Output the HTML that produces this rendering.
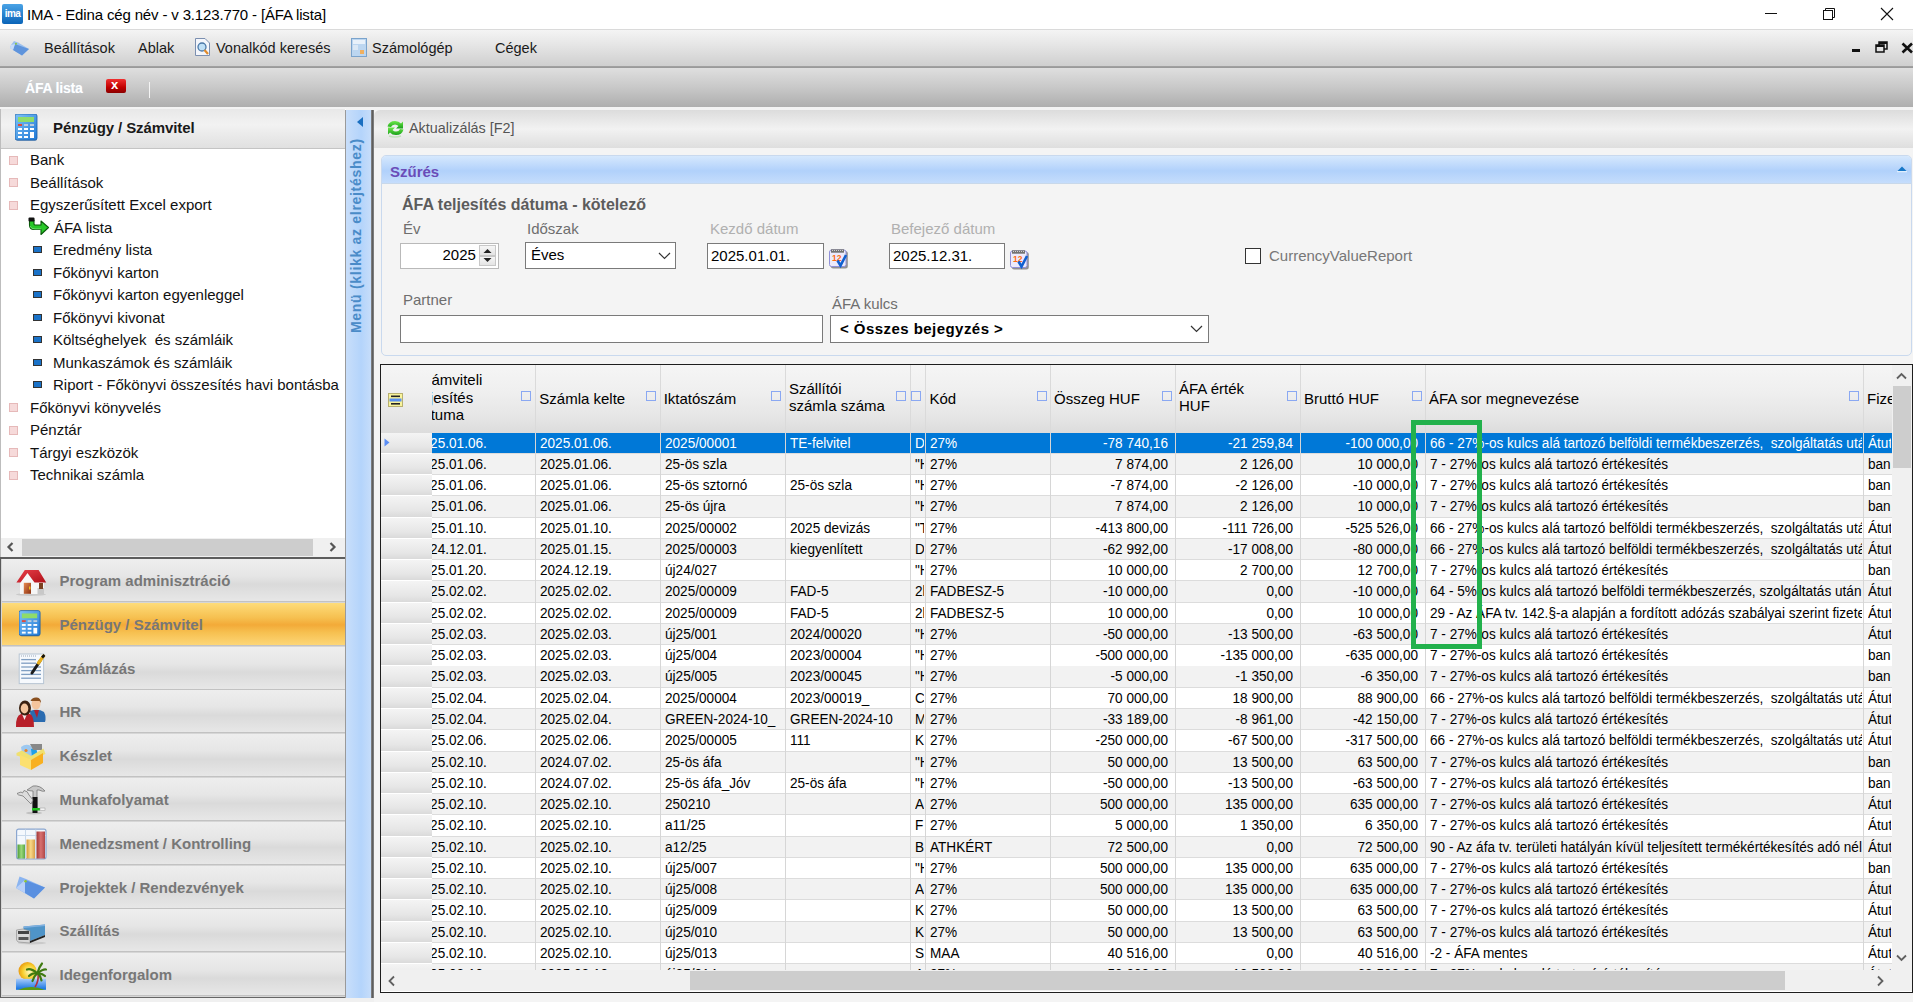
<!DOCTYPE html><html><head><meta charset="utf-8"><style>
*{box-sizing:border-box;margin:0;padding:0}
html,body{width:1913px;height:1002px;overflow:hidden;background:#f0f0f0;font-family:"Liberation Sans",sans-serif;color:#000}
.abs{position:absolute}
.t{position:absolute;white-space:nowrap;line-height:1}
#title{left:0;top:0;width:1913px;height:29px;background:#fff}
#menubar{left:0;top:29px;width:1913px;height:38px;background:linear-gradient(#f4f4f4,#e6e6e6 40%,#cfcfcf);border-top:1px solid #dadada;border-bottom:1px solid #a0a0a0}
#tabbar{left:0;top:67px;width:1913px;height:40px;background:linear-gradient(#dfdfdf,#c8c8c8 50%,#aeaeae);border-top:1px solid #9a9a9a}
#sep1{left:0;top:107px;width:1913px;height:3px;background:#f3f3f3}
#leftpanel{left:0;top:109px;width:346px;height:889px;background:#fff;border-left:1px solid #bdbdbd}
#lhead{left:1px;top:109px;width:344px;height:39.5px;background:linear-gradient(#e8e8e8,#f2f2f2 40%,#e0e0e0 100%);border-bottom:1px solid #c4c4c4}
.tree{font-size:15px;color:#111;white-space:pre}
.bul{position:absolute;width:9px;height:9px;background:#f6dada;border:1px solid #e6b9b9}
.bul2{position:absolute;width:9px;height:7px;background:#1a72c8;border:1px solid #333}
#hscroll{left:1px;top:538px;width:344px;height:19px;background:#f0f0f0}
#acc{left:0;top:557px;width:346px;height:441px;background:#d6d6d6;border-left:1.5px solid #5a5a5a;border-top:2px solid #5d5d5d;border-right:1.5px solid #5a5a5a;border-bottom:1.5px solid #666}
.btn{position:absolute;left:1.5px;width:343px;height:43px;background:linear-gradient(#eeeeee,#e6e6e6 40%,#dadada 60%,#e7e7e7);border-bottom:1px solid #c2c2c2}
.btn.sel{background:linear-gradient(#fddc7a,#f6c050 35%,#f3aa38 52%,#f6c050 70%,#fdd677)}
.btn .bt{position:absolute;left:58px;top:14px;font-size:15px;font-weight:bold;color:#777;white-space:nowrap;line-height:1}
#vbar{left:345px;top:110px;width:26px;height:888px;background:linear-gradient(90deg,#c8defa,#b4d4fb 60%,#c6ddfa);border-left:1px solid #9a9a9a}
#vline{left:371px;top:110px;width:3px;height:888px;background:linear-gradient(90deg,#8a8a8a,#5e5e5e 50%,#8a8a8a)}
#content{left:374px;top:110px;width:1539px;height:892px;background:#f4f4f4}
#toolbar{left:374px;top:110px;width:1539px;height:38px;background:linear-gradient(#dcdcdc,#f2f2f2 50%,#dedede);border-radius:6px 0 0 0}
#filter{left:381px;top:155px;width:1531px;height:201px;border:1px solid #c9d9ee;border-radius:5px;background:#f4f4f4}
#fhead{left:382px;top:156px;width:1529px;height:28px;background:linear-gradient(#d6e8fd,#b1d1fb 55%,#c5ddfc);border-bottom:1px solid #c8d8ea;border-radius:4px 4px 0 0}
.lbl{font-size:15px;color:#6e6e6e}
.lbl2{font-size:15px;color:#b0b0b0}
.inp{position:absolute;background:#fff;border:1px solid #7a7a7a}
#grid{left:380px;top:364px;width:1533px;height:629px;border:1px solid #707070;background:#fff;overflow:hidden}
.gh{position:absolute;font-size:15px;color:#111;white-space:nowrap;line-height:17px}
.row{position:absolute;left:0;height:21px;width:1512px;font-size:14px;white-space:nowrap}
.c{position:absolute;top:0;height:20px;line-height:20px;overflow:hidden;padding-left:4px;border-right:1px solid #dcdcdc}
.r{text-align:right;padding-right:5px;padding-left:0}
.fsq{position:absolute;width:11px;height:11px;border:1.5px solid #7b9ef2}
</style></head><body>
<div id="title" class="abs"></div>
<svg class="abs" style="left:2px;top:4px" width="21" height="20" viewBox="0 0 21 20"><defs><linearGradient id="ig" x1="0" y1="0" x2="0" y2="1"><stop offset="0" stop-color="#4aa3e6"/><stop offset="1" stop-color="#0a64b8"/></linearGradient></defs><rect x="0" y="0" width="21" height="20" rx="2" fill="url(#ig)"/><text x="10.5" y="13" font-family="Liberation Sans" font-size="10" font-weight="bold" fill="#fff" text-anchor="middle" letter-spacing="-0.6">ima</text></svg>
<div class="t" style="left:27px;top:7px;font-size:15px;letter-spacing:-0.15px;color:#000">IMA - Edina cég név - v 3.123.770 - [ÁFA lista]</div>
<div class="abs" style="left:1765px;top:13px;width:12px;height:1px;background:#111"></div>
<svg class="abs" style="left:1822px;top:7px" width="14" height="14"><rect x="1.5" y="3.5" width="9" height="9" fill="none" stroke="#111"/><path d="M3.5 3.5V1.5H12.5V10.5H10.5" fill="none" stroke="#111"/></svg>
<svg class="abs" style="left:1880px;top:7px" width="14" height="14"><path d="M1 1L13 13M13 1L1 13" stroke="#111" stroke-width="1.1"/></svg>
<div id="menubar" class="abs"></div>
<svg class="abs" style="left:9px;top:39px" width="22" height="18" viewBox="0 0 22 18"><path d="M2 6L5 2L9 3.5L20 10L13 16.5L1 9Z" fill="#9cc0ee"/><path d="M6 5L20 10L13 16.5L4 11Z" fill="#5f94dc"/><path d="M2 6L6 5L4 11L1 9Z" fill="#c8dcf8"/><circle cx="7" cy="4.8" r="1" fill="#8cc83c"/></svg>
<div class="t" style="left:44px;top:41px;font-size:14.5px;color:#1a1a1a">Beállítások</div>
<div class="t" style="left:138px;top:41px;font-size:14.5px;color:#1a1a1a">Ablak</div>
<div class="t" style="left:216px;top:41px;font-size:14.5px;color:#1a1a1a">Vonalkód keresés</div>
<div class="t" style="left:372px;top:41px;font-size:14.5px;color:#1a1a1a">Számológép</div>
<div class="t" style="left:495px;top:41px;font-size:14.5px;color:#1a1a1a">Cégek</div>
<svg class="abs" style="left:194px;top:38px" width="18" height="19" viewBox="0 0 18 19"><path d="M1.5 0.5H11L15.5 5V17.5H1.5Z" fill="#f4f6fb" stroke="#7b8fb0"/><circle cx="8" cy="9" r="4" fill="#bfe0f7" stroke="#4a78a8" stroke-width="1.3"/><path d="M10.5 12L14 16" stroke="#e08a2a" stroke-width="2.2"/></svg>
<svg class="abs" style="left:351px;top:38px" width="16" height="19" viewBox="0 0 16 19"><rect x="0.5" y="0.5" width="15" height="18" fill="#bcd6f0" stroke="#7aa3cc"/><rect x="2" y="2" width="12" height="4" fill="#e8f1fa"/><rect x="2" y="7" width="5" height="5" fill="#dbe8f5"/><rect x="9" y="12" width="4" height="4" fill="#f0b060"/></svg>
<div class="abs" style="left:1852px;top:49px;width:8px;height:3px;background:#111"></div>
<svg class="abs" style="left:1875px;top:41px" width="14" height="12"><rect x="1" y="4" width="8" height="7" fill="none" stroke="#111" stroke-width="1.5"/><rect x="1" y="4" width="8" height="2" fill="#111"/><path d="M4 4V1H12V8H9" fill="none" stroke="#111" stroke-width="1.5"/><rect x="4" y="1" width="8" height="2" fill="#111"/></svg>
<svg class="abs" style="left:1901px;top:42px" width="14" height="12"><path d="M1.5 1.5L11 10.5M11 1.5L1.5 10.5" stroke="#111" stroke-width="2.6"/></svg>
<div id="tabbar" class="abs"></div>
<div class="t" style="left:25px;top:81px;font-size:14px;font-weight:bold;color:#fff;letter-spacing:-0.2px;text-shadow:0 0 1px #c8d8e8">ÁFA lista</div>
<div class="abs" style="left:106px;top:79px;width:20px;height:14px;border-radius:2px;background:linear-gradient(#f03030,#c00000 60%,#8a0000);"></div>
<div class="t" style="left:111px;top:78px;font-size:13px;font-weight:bold;color:#fff">x</div>
<div class="abs" style="left:149px;top:82px;width:1px;height:16px;background:#f4f4f4"></div>
<div id="sep1" class="abs"></div>
<div id="leftpanel" class="abs"></div>
<div id="lhead" class="abs"></div>
<svg class="abs" style="left:15px;top:114px" width="24" height="28" viewBox="0 0 24 28"><defs><linearGradient id="cg129" x1="0" y1="0" x2="1" y2="1"><stop offset="0" stop-color="#7ec3f7"/><stop offset="1" stop-color="#1f78d6"/></linearGradient></defs><rect x="1" y="1" width="21" height="26" rx="2" fill="#2a5f9e" opacity=".5"/><rect x="0" y="0" width="22" height="26" rx="2" fill="url(#cg129)" stroke="#1d5fa8" stroke-width=".8"/><rect x="3" y="3" width="16" height="5" fill="#8fdc6a"/><rect x="3" y="10" width="4" height="2" fill="#e04a3a"/><rect x="9" y="10" width="4" height="2" fill="#bcd"/><rect x="15" y="10" width="4" height="2" fill="#bcd"/><g fill="#fff"><rect x="3" y="14" width="4" height="2"/><rect x="9" y="14" width="4" height="2"/><rect x="3" y="18" width="4" height="2"/><rect x="9" y="18" width="4" height="2"/><rect x="3" y="22" width="4" height="2"/><rect x="9" y="22" width="4" height="2"/><rect x="15" y="14" width="4" height="2"/><rect x="15" y="18" width="4" height="6"/></g></svg>
<div class="t" style="left:53px;top:120px;font-size:15px;font-weight:bold;color:#1a1a1a;letter-spacing:-0.1px">Pénzügy / Számvitel</div>
<div class="abs" style="left:1px;top:148px;width:344px;height:390px;overflow:hidden">
<div class="bul" style="left:8px;top:7.6px"></div>
<div class="t tree" style="left:29px;top:4.3px">Bank</div>
<div class="bul" style="left:8px;top:30.1px"></div>
<div class="t tree" style="left:29px;top:26.8px">Beállítások</div>
<div class="bul" style="left:8px;top:52.6px"></div>
<div class="t tree" style="left:29px;top:49.3px">Egyszerűsített Excel export</div>
<svg class="abs" style="left:26px;top:69.3px" width="23" height="19" viewBox="0 0 23 19"><path d="M2.5 3V8Q2.5 12.5 7 12.5H14V17.5L21.5 10.5L14 4V8H8Q7 8 7 7V3Z" fill="#28c828" stroke="#0a5a0a" stroke-width="1.1" stroke-linejoin="round"/><path d="M3 9Q4 12 8 12H14" stroke="#9cf09c" stroke-width="1" fill="none" opacity=".6"/><rect x="1.5" y="0.5" width="6" height="4" rx="1" fill="#111"/></svg>
<div class="t tree" style="left:53px;top:71.8px">ÁFA lista</div>
<div class="bul2" style="left:32px;top:98.1px"></div>
<div class="t tree" style="left:52px;top:94.3px">Eredmény lista</div>
<div class="bul2" style="left:32px;top:120.6px"></div>
<div class="t tree" style="left:52px;top:116.8px">Főkönyvi karton</div>
<div class="bul2" style="left:32px;top:143.1px"></div>
<div class="t tree" style="left:52px;top:139.3px">Főkönyvi karton egyenleggel</div>
<div class="bul2" style="left:32px;top:165.6px"></div>
<div class="t tree" style="left:52px;top:161.8px">Főkönyvi kivonat</div>
<div class="bul2" style="left:32px;top:188.1px"></div>
<div class="t tree" style="left:52px;top:184.3px">Költséghelyek  és számláik</div>
<div class="bul2" style="left:32px;top:210.6px"></div>
<div class="t tree" style="left:52px;top:206.8px">Munkaszámok és számláik</div>
<div class="bul2" style="left:32px;top:233.1px"></div>
<div class="t tree" style="left:52px;top:229.3px">Riport - Főkönyvi összesítés havi bontásba</div>
<div class="bul" style="left:8px;top:255.1px"></div>
<div class="t tree" style="left:29px;top:251.8px">Főkönyvi könyvelés</div>
<div class="bul" style="left:8px;top:277.6px"></div>
<div class="t tree" style="left:29px;top:274.3px">Pénztár</div>
<div class="bul" style="left:8px;top:300.1px"></div>
<div class="t tree" style="left:29px;top:296.8px">Tárgyi eszközök</div>
<div class="bul" style="left:8px;top:322.6px"></div>
<div class="t tree" style="left:29px;top:319.3px">Technikai számla</div>
</div>
<div id="hscroll" class="abs"></div>
<div class="abs" style="left:22px;top:539px;width:291px;height:17px;background:#cdcdcd"></div>
<svg class="abs" style="left:6px;top:542px" width="8" height="10"><path d="M6.5 1L2.5 5L6.5 9" fill="none" stroke="#555" stroke-width="2.2"/></svg>
<svg class="abs" style="left:329px;top:542px" width="8" height="10"><path d="M1.5 1L5.5 5L1.5 9" fill="none" stroke="#555" stroke-width="2.2"/></svg>
<div id="acc" class="abs"></div>
<div class="btn" style="top:559.0px"><div class="bt">Program adminisztráció</div></div>
<div class="btn sel" style="top:602.8px"><div class="bt">Pénzügy / Számvitel</div></div>
<div class="btn" style="top:646.6px"><div class="bt">Számlázás</div></div>
<div class="btn" style="top:690.4px"><div class="bt">HR</div></div>
<div class="btn" style="top:734.2px"><div class="bt">Készlet</div></div>
<div class="btn" style="top:778.0px"><div class="bt">Munkafolyamat</div></div>
<div class="btn" style="top:821.8px"><div class="bt">Menedzsment / Kontrolling</div></div>
<div class="btn" style="top:865.6px"><div class="bt">Projektek / Rendezvények</div></div>
<div class="btn" style="top:909.4px"><div class="bt">Szállítás</div></div>
<div class="btn" style="top:953.2px"><div class="bt">Idegenforgalom</div></div>
<svg class="abs" style="left:10px;top:562px" width="40" height="40" viewBox="0 0 40 40"><defs><linearGradient id="roof" x1="0" y1="0" x2="1" y2="1"><stop offset="0" stop-color="#e8404a"/><stop offset="1" stop-color="#b01018"/></linearGradient><linearGradient id="door" x1="0" y1="0" x2="1" y2="1"><stop offset="0" stop-color="#e88a50"/><stop offset="1" stop-color="#8a3010"/></linearGradient></defs>
<ellipse cx="21" cy="32.5" rx="15" ry="1.5" fill="#bbb" opacity=".6"/>
<rect x="10" y="19" width="24" height="13" fill="#f6f6f6"/><rect x="27.5" y="26" width="6.5" height="6" fill="#c8c8c8"/>
<path d="M10 20.6L17.5 11L24.5 20.6Z" fill="#f8f8f8"/>
<path d="M6.4 20.6L14.8 8H28.6L36.2 20.6H24.5L17.5 11L10.5 20.6Z" fill="url(#roof)"/>
<rect x="13.8" y="20.8" width="7.2" height="11" fill="url(#door)"/><rect x="19" y="24.5" width="1.5" height="3" fill="#f0c020"/>
<rect x="29" y="21" width="4" height="6" fill="#7a4020"/></svg>
<svg class="abs" style="left:19px;top:610px" width="23" height="28" viewBox="0 0 24 28"><defs><linearGradient id="cg629" x1="0" y1="0" x2="1" y2="1"><stop offset="0" stop-color="#7ec3f7"/><stop offset="1" stop-color="#1f78d6"/></linearGradient></defs><rect x="1" y="1" width="21" height="26" rx="2" fill="#2a5f9e" opacity=".5"/><rect x="0" y="0" width="22" height="26" rx="2" fill="url(#cg629)" stroke="#1d5fa8" stroke-width=".8"/><rect x="3" y="3" width="16" height="5" fill="#8fdc6a"/><rect x="3" y="10" width="4" height="2" fill="#e04a3a"/><rect x="9" y="10" width="4" height="2" fill="#bcd"/><rect x="15" y="10" width="4" height="2" fill="#bcd"/><g fill="#fff"><rect x="3" y="14" width="4" height="2"/><rect x="9" y="14" width="4" height="2"/><rect x="3" y="18" width="4" height="2"/><rect x="9" y="18" width="4" height="2"/><rect x="3" y="22" width="4" height="2"/><rect x="9" y="22" width="4" height="2"/><rect x="15" y="14" width="4" height="2"/><rect x="15" y="18" width="4" height="6"/></g></svg>
<svg class="abs" style="left:10px;top:648px" width="40" height="40" viewBox="0 0 40 40"><rect x="9.2" y="6" width="24.4" height="29.6" fill="#f6f9fd" stroke="#b8c6d4" stroke-width="1"/>
<path d="M11 8H26" stroke="#9aa8b8" stroke-width="1" stroke-dasharray="1 1"/>
<g stroke="#7f9ec2" stroke-width="1.3"><path d="M11.2 11.6H26"/><path d="M11.2 15.2H26"/><path d="M11.2 19H31"/><path d="M11.2 22.6H31"/><path d="M11.2 26.4H31"/><path d="M11.2 30.2H31"/></g>
<path d="M22 25L30 13" stroke="#1a1a1a" stroke-width="3" stroke-linecap="round"/><path d="M28.5 15L33.5 8" stroke="#e8b020" stroke-width="3.2" stroke-linecap="round"/><path d="M32 9.5L34.5 7" stroke="#111" stroke-width="2.5"/></svg>
<svg class="abs" style="left:10px;top:692px" width="40" height="40" viewBox="0 0 40 40"><path d="M20 19Q28 16 34 20Q36.5 25 35 30H21Z" fill="#2a6bb0"/><path d="M24 18L27 26L29 18Z" fill="#b02030"/>
<ellipse cx="26" cy="12" rx="4.5" ry="5.5" fill="#f4c49c"/><path d="M20.5 9Q22 5 27 5.5Q31 6 31 11L29.5 9Q25 9 20.5 9Z" fill="#8a5020"/>
<path d="M6 35Q5.5 24 11 22H20Q24 24 24 35Z" fill="#b8202a"/><path d="M12 22L14.5 28L17 22Z" fill="#f8e8e8"/>
<ellipse cx="15" cy="16" rx="6" ry="7.5" fill="#3a2010"/><ellipse cx="14.5" cy="16.5" rx="3.8" ry="5" fill="#f4c49c"/></svg>
<svg class="abs" style="left:10px;top:736px" width="40" height="40" viewBox="0 0 40 40"><path d="M11 11Q16 7 21 10L26 20L13 22Z" fill="#9cc8f0"/><circle cx="16" cy="14.5" r="1.6" fill="#f08020"/><path d="M21 13L26 12L28 19L22 21Z" fill="#20a0e8"/><path d="M20 8H32V14H23Z" fill="#888"/>
<path d="M6.5 17L12 14.5L21 20L33.5 12.5L35.5 18L21 24L6.5 19.5Z" fill="#f0e070"/>
<path d="M10 19L21 24V34L10 29Z" fill="#fce070"/><path d="M21 24L33 17V27L21 34Z" fill="#f8b020"/></svg>
<svg class="abs" style="left:10px;top:779px" width="40" height="40" viewBox="0 0 40 40"><ellipse cx="24" cy="34" rx="8" ry="1.5" fill="#aaa" opacity=".6"/>
<path d="M23 7Q30 6 35 12Q33 13 29 11H27V30H23V12Q20 12 17 11Z" fill="#c8c8c8" stroke="#777" stroke-width=".8"/>
<rect x="22.5" y="18" width="5" height="16" fill="#111"/><rect x="22" y="29" width="8" height="2.5" fill="#20c020"/><rect x="30" y="29" width="5" height="2.5" fill="#f4f4f4" stroke="#999" stroke-width=".5"/>
<path d="M21 25L13 17Q7 16 7 14.5L11 13L12.5 14L14 11.5Q18 12 19 16L23 21Z" fill="#dcdcdc" stroke="#777" stroke-width=".8"/></svg>
<svg class="abs" style="left:10px;top:823px" width="40" height="40" viewBox="0 0 40 40"><rect x="6.6" y="6.2" width="29.4" height="29.6" rx="2" fill="#f4f8fd" stroke="#8aa6d0" stroke-width="1.2"/>
<path d="M7 12.5H36M15.5 6.5V36M25.8 6.5V36" stroke="#c8d8ea" stroke-width="1"/>
<defs><linearGradient id="gb" x1="0" y1="0" x2="1" y2="0"><stop offset="0" stop-color="#4a9a3a"/><stop offset=".5" stop-color="#9ad878"/><stop offset="1" stop-color="#5aa848"/></linearGradient><linearGradient id="yb" x1="0" y1="0" x2="1" y2="0"><stop offset="0" stop-color="#d89a38"/><stop offset=".5" stop-color="#f8d888"/><stop offset="1" stop-color="#d8a048"/></linearGradient><linearGradient id="rb" x1="0" y1="0" x2="1" y2="0"><stop offset="0" stop-color="#a03838"/><stop offset=".5" stop-color="#d87070"/><stop offset="1" stop-color="#b04848"/></linearGradient></defs>
<rect x="7.5" y="21.5" width="7.5" height="14" fill="url(#gb)"/><rect x="16.5" y="16.5" width="8.5" height="19" fill="url(#yb)"/><rect x="26.5" y="8.5" width="8.5" height="27" fill="url(#rb)"/></svg>
<svg class="abs" style="left:10px;top:867px" width="40" height="40" viewBox="0 0 40 40"><path d="M6 21L9.5 9.5L16 12L35 20.5L24 31.5Z" fill="#8ab4f0"/><path d="M15 13L35 20.5L24 31.5L15 26Z" fill="#5a90e0"/><path d="M6 21L15 26L15 13Z" fill="#b8d0f8"/><circle cx="15.5" cy="14.2" r="1.3" fill="#90c830"/></svg>
<svg class="abs" style="left:10px;top:910px" width="40" height="40" viewBox="0 0 40 40"><ellipse cx="22" cy="33" rx="14" ry="1.5" fill="#bbb" opacity=".6"/>
<path d="M13.5 16.5L35 14.5V25L20 31L13.5 27Z" fill="#4f94c8"/><path d="M13.5 16.5L35 14.5V16L14 18Z" fill="#7fb0e0"/>
<path d="M6.5 20L13 19L20 21V33L8 32L6.5 30Z" fill="#d8d8d8" stroke="#888" stroke-width=".6"/><rect x="8" y="21" width="11" height="3" fill="#444"/><rect x="8.5" y="27" width="10" height="3" fill="#555"/><path d="M20 31L35 25V27L20 33Z" fill="#222"/></svg>
<svg class="abs" style="left:10px;top:954px" width="40" height="40" viewBox="0 0 40 40"><defs><radialGradient id="sun" cx=".6" cy=".55" r=".6"><stop offset="0" stop-color="#fff8c0"/><stop offset=".6" stop-color="#f8d030"/><stop offset="1" stop-color="#e89a10"/></radialGradient><linearGradient id="sea" x1="0" y1="0" x2="0" y2="1"><stop offset="0" stop-color="#a8ccfc"/><stop offset="1" stop-color="#1070e0"/></linearGradient></defs>
<circle cx="17.5" cy="17" r="9" fill="url(#sun)"/>
<rect x="6" y="24.8" width="30" height="11" fill="url(#sea)"/><path d="M8 36Q21 30 35 36Z" fill="#5a9a10"/>
<path d="M25 33Q29 27 28 20" stroke="#b03040" stroke-width="1.6" fill="none"/>
<g stroke="#3f7a10" stroke-width="2.2" fill="none" stroke-linecap="round"><path d="M27 19Q21 14 17 15.5"/><path d="M27 19Q22 19 19 22"/><path d="M27.5 19Q24 22 22.5 27"/><path d="M27.5 19Q29 13 32 9.5"/><path d="M28 19Q33 15 36 15.5"/><path d="M28 19Q33 20 35 22"/><path d="M28 19Q31 23 31.5 26.5"/></g></svg>
<div id="vbar" class="abs"></div>
<svg class="abs" style="left:357px;top:117px" width="7" height="10"><path d="M6 0V10L0 5Z" fill="#1a6fc0"/></svg>
<div class="t" style="left:349px;top:333px;transform-origin:0 0;transform:rotate(-90deg);font-size:14px;font-weight:bold;color:#4a8bc8;letter-spacing:0.7px">Menü (klikk az elrejtéshez)</div>
<div id="vline" class="abs"></div>
<div id="content" class="abs"></div>
<div id="toolbar" class="abs"></div>
<svg class="abs" style="left:386px;top:118px" width="19" height="20" viewBox="0 0 19 20"><defs><linearGradient id="rg" x1="0" y1="0" x2="0" y2="1"><stop offset="0" stop-color="#6ee84a"/><stop offset="1" stop-color="#18a018"/></linearGradient></defs><path d="M1.5 8.5Q3 3 9 3Q13 3 15 5.5L17 3.5V10.5H10L12.5 8Q11 6.5 9 6.5Q6 6.5 5 9Z" fill="url(#rg)"/><path d="M17.5 11.5Q16 17 10 17Q6 17 4 14.5L2 16.5V9.5H9L6.5 12Q8 13.5 10 13.5Q13 13.5 14 11Z" fill="url(#rg)"/><path d="M3 18Q9 20 15 18" stroke="#9ad890" stroke-width="1.5" opacity=".5" fill="none"/></svg>
<div class="t" style="left:409px;top:121px;font-size:14.4px;color:#555">Aktualizálás [F2]</div>
<div id="filter" class="abs"></div>
<div id="fhead" class="abs"></div>
<div class="t" style="left:390px;top:164px;font-size:15px;font-weight:bold;color:#6a4cb8">Szűrés</div>
<svg class="abs" style="left:1897px;top:165px" width="10" height="8"><path d="M0.5 6L5 1.5L9.5 6Z" fill="#1878c8"/><rect x="0" y="6" width="10" height="1.3" fill="#e0eefc"/></svg>
<div class="t" style="left:402px;top:197px;font-size:16px;font-weight:bold;color:#5c5c5c">ÁFA teljesítés dátuma - kötelező</div>
<div class="t lbl" style="left:403px;top:221px">Év</div>
<div class="t lbl" style="left:527px;top:221px">Időszak</div>
<div class="t lbl2" style="left:710px;top:221px">Kezdő dátum</div>
<div class="t lbl2" style="left:891px;top:221px">Befejező dátum</div>
<div class="inp" style="left:400px;top:243px;width:99px;height:26px;border-color:#b9b9b9"></div>
<div class="t" style="left:442.5px;top:247px;font-size:15px">2025</div>
<div class="abs" style="left:479px;top:245px;width:17px;height:10.5px;background:linear-gradient(#f6f6f6,#e4e4e4);border:1px solid #c8c8c8"></div><div class="abs" style="left:479px;top:255.5px;width:17px;height:10px;background:linear-gradient(#f6f6f6,#e4e4e4);border:1px solid #c8c8c8"></div>
<svg class="abs" style="left:482px;top:246px" width="11" height="19"><path d="M1.5 7L5.5 3L9.5 7Z" fill="#222"/><path d="M1.5 12L5.5 16L9.5 12Z" fill="#222"/></svg>
<div class="inp" style="left:525px;top:242px;width:151px;height:27px;border:1.5px solid #7a7a7a"></div>
<div class="t" style="left:531px;top:247px;font-size:15px">Éves</div>
<svg class="abs" style="left:658px;top:252px" width="13" height="8"><path d="M1 1L6.5 6.5L12 1" fill="none" stroke="#333" stroke-width="1.2"/></svg>
<div class="inp" style="left:707px;top:243px;width:117px;height:26px;border:1.5px solid #7a7a7a"></div>
<div class="t" style="left:711px;top:248px;font-size:15px">2025.01.01.</div>
<div class="inp" style="left:889px;top:243px;width:116px;height:26px;border:1.5px solid #7a7a7a"></div>
<div class="t" style="left:893px;top:248px;font-size:15px">2025.12.31.</div>
<svg class="abs" style="left:829px;top:249px" width="21" height="20" viewBox="0 0 21 20"><rect x="1.8" y="2" width="17" height="17.5" rx="2.5" fill="#6f6f6f" opacity=".75"/><rect x="0.5" y="1" width="16.5" height="16.5" rx="2" fill="#eceafb" stroke="#9090d8" stroke-width="1"/><rect x="2" y="0.3" width="13" height="3.4" fill="#727272"/><path d="M3 1.5H14" stroke="#cfcfcf" stroke-width="1" stroke-dasharray="1 1"/><text x="3" y="11.5" font-family="Liberation Sans" font-size="8.5" font-weight="bold" fill="#ff6a10">12</text><path d="M8.5 11.5L11.5 16.5L17 6" fill="none" stroke="#1060d0" stroke-width="2.6"/></svg>
<svg class="abs" style="left:1010px;top:250px" width="21" height="20" viewBox="0 0 21 20"><rect x="1.8" y="2" width="17" height="17.5" rx="2.5" fill="#6f6f6f" opacity=".75"/><rect x="0.5" y="1" width="16.5" height="16.5" rx="2" fill="#eceafb" stroke="#9090d8" stroke-width="1"/><rect x="2" y="0.3" width="13" height="3.4" fill="#727272"/><path d="M3 1.5H14" stroke="#cfcfcf" stroke-width="1" stroke-dasharray="1 1"/><text x="3" y="11.5" font-family="Liberation Sans" font-size="8.5" font-weight="bold" fill="#ff6a10">12</text><path d="M8.5 11.5L11.5 16.5L17 6" fill="none" stroke="#1060d0" stroke-width="2.6"/></svg>
<div class="abs" style="left:1245px;top:248px;width:16px;height:16px;background:#fff;border:1.5px solid #333"></div>
<div class="t" style="left:1269px;top:248px;font-size:15px;color:#777">CurrencyValueReport</div>
<div class="t lbl" style="left:403px;top:292px">Partner</div>
<div class="t lbl" style="left:832px;top:296px">ÁFA kulcs</div>
<div class="inp" style="left:400px;top:315px;width:423px;height:28px;border:1.5px solid #7a7a7a"></div>
<div class="inp" style="left:830px;top:315px;width:379px;height:28px;border:1.5px solid #7a7a7a"></div>
<div class="t" style="left:840px;top:321px;font-size:15px;font-weight:bold;letter-spacing:0.45px">&lt; Összes bejegyzés &gt;</div>
<svg class="abs" style="left:1190px;top:325px" width="13" height="8"><path d="M1 1L6.5 6.5L12 1" fill="none" stroke="#333" stroke-width="1.2"/></svg>
<div class="abs" style="left:380px;top:364px;width:1533px;height:629px;border:1.5px solid #1e1e1e;background:#fff"></div>
<div class="abs" style="left:381px;top:365px;width:1511px;height:605px;overflow:hidden;background:#fff">
<div class="abs" style="left:0;top:0;width:1511px;height:67.5px;background:linear-gradient(#f5f5f5,#efefef 40%,#e6e6e6 75%,#dcdcdc)"></div>
<div class="abs" style="left:154.0px;top:0;width:1px;height:605px;background:#dadada"></div>
<div class="abs" style="left:279.0px;top:0;width:1px;height:605px;background:#dadada"></div>
<div class="abs" style="left:404.0px;top:0;width:1px;height:605px;background:#dadada"></div>
<div class="abs" style="left:529.0px;top:0;width:1px;height:605px;background:#dadada"></div>
<div class="abs" style="left:544.0px;top:0;width:1px;height:605px;background:#dadada"></div>
<div class="abs" style="left:669.0px;top:0;width:1px;height:605px;background:#dadada"></div>
<div class="abs" style="left:794.0px;top:0;width:1px;height:605px;background:#dadada"></div>
<div class="abs" style="left:919.0px;top:0;width:1px;height:605px;background:#dadada"></div>
<div class="abs" style="left:1044.0px;top:0;width:1px;height:605px;background:#dadada"></div>
<div class="abs" style="left:1482.0px;top:0;width:1px;height:605px;background:#dadada"></div>
<div class="t" style="left:33.0px;top:7.0px;font-size:15px;color:#000">Számviteli</div>
<div class="t" style="left:33.0px;top:24.5px;font-size:15px;color:#000">teljesítés</div>
<div class="t" style="left:33.0px;top:42.0px;font-size:15px;color:#000">dátuma</div>
<div class="t" style="left:158.3px;top:25.6px;font-size:15px;color:#000">Számla kelte</div>
<div class="t" style="left:282.7px;top:25.6px;font-size:15px;color:#000">Iktatószám</div>
<div class="t" style="left:408.0px;top:15.5px;font-size:15px;color:#000">Szállítói</div>
<div class="t" style="left:408.0px;top:33.0px;font-size:15px;color:#000">számla száma</div>
<div class="t" style="left:548.4px;top:25.6px;font-size:15px;color:#000">Kód</div>
<div class="t" style="left:673.0px;top:25.6px;font-size:15px;color:#000">Összeg HUF</div>
<div class="t" style="left:798.0px;top:15.5px;font-size:15px;color:#000">ÁFA érték</div>
<div class="t" style="left:798.0px;top:33.0px;font-size:15px;color:#000">HUF</div>
<div class="t" style="left:923.0px;top:25.6px;font-size:15px;color:#000">Bruttó HUF</div>
<div class="t" style="left:1048.0px;top:25.6px;font-size:15px;color:#000">ÁFA sor megnevezése</div>
<div class="t" style="left:1486.0px;top:25.6px;font-size:15px;color:#000">Fizetési mód</div>
<div class="abs" style="left:140.2px;top:26.3px;width:10px;height:10px;border:1.3px solid #8aa8f2"></div>
<div class="abs" style="left:265.0px;top:26.3px;width:10px;height:10px;border:1.3px solid #8aa8f2"></div>
<div class="abs" style="left:390.0px;top:26.3px;width:10px;height:10px;border:1.3px solid #8aa8f2"></div>
<div class="abs" style="left:515.2px;top:26.3px;width:10px;height:10px;border:1.3px solid #8aa8f2"></div>
<div class="abs" style="left:530.3px;top:26.3px;width:10px;height:10px;border:1.3px solid #8aa8f2"></div>
<div class="abs" style="left:655.6px;top:26.3px;width:10px;height:10px;border:1.3px solid #8aa8f2"></div>
<div class="abs" style="left:780.7px;top:26.3px;width:10px;height:10px;border:1.3px solid #8aa8f2"></div>
<div class="abs" style="left:905.8px;top:26.3px;width:10px;height:10px;border:1.3px solid #8aa8f2"></div>
<div class="abs" style="left:1030.8px;top:26.3px;width:10px;height:10px;border:1.3px solid #8aa8f2"></div>
<div class="abs" style="left:1468.0px;top:26.3px;width:10px;height:10px;border:1.3px solid #8aa8f2"></div>
<div class="abs" style="left:51.0px;top:67.50px;width:1460px;height:20.3px;background:#0078d7"></div>
<div class="abs" style="left:51.0px;top:87.80px;width:1460px;height:1px;background:#dcdcdc"></div>
<div class="abs" style="left:29.5px;top:67.50px;width:123.5px;height:20.3px;overflow:hidden"><div style="white-space:pre;font-size:13.6px;line-height:21px;color:#fff;padding-left:4.5px;transform:scaleY(1.09);transform-origin:0 15.4px">2025.01.06.</div></div>
<div class="abs" style="left:154.5px;top:67.50px;width:123.5px;height:20.3px;overflow:hidden"><div style="white-space:pre;font-size:13.6px;line-height:21px;color:#fff;padding-left:4.5px;transform:scaleY(1.09);transform-origin:0 15.4px">2025.01.06.</div></div>
<div class="abs" style="left:279.5px;top:67.50px;width:123.5px;height:20.3px;overflow:hidden"><div style="white-space:pre;font-size:13.6px;line-height:21px;color:#fff;padding-left:4.5px;transform:scaleY(1.09);transform-origin:0 15.4px">2025/00001</div></div>
<div class="abs" style="left:404.5px;top:67.50px;width:123.5px;height:20.3px;overflow:hidden"><div style="white-space:pre;font-size:13.6px;line-height:21px;color:#fff;padding-left:4.5px;transform:scaleY(1.09);transform-origin:0 15.4px">TE-felvitel</div></div>
<div class="abs" style="left:529.5px;top:67.50px;width:13.5px;height:20.3px;overflow:hidden"><div style="white-space:pre;font-size:13.6px;line-height:21px;color:#fff;padding-left:4.5px;transform:scaleY(1.09);transform-origin:0 15.4px">D</div></div>
<div class="abs" style="left:544.5px;top:67.50px;width:123.5px;height:20.3px;overflow:hidden"><div style="white-space:pre;font-size:13.6px;line-height:21px;color:#fff;padding-left:4.5px;transform:scaleY(1.09);transform-origin:0 15.4px">27%</div></div>
<div class="abs" style="left:669.0px;top:67.50px;width:125.0px;height:20.3px;overflow:hidden"><div style="white-space:pre;font-size:13.6px;line-height:21px;color:#fff;text-align:right;padding-right:7px;transform:scaleY(1.09);transform-origin:0 15.4px">-78 740,16</div></div>
<div class="abs" style="left:794.0px;top:67.50px;width:125.0px;height:20.3px;overflow:hidden"><div style="white-space:pre;font-size:13.6px;line-height:21px;color:#fff;text-align:right;padding-right:7px;transform:scaleY(1.09);transform-origin:0 15.4px">-21 259,84</div></div>
<div class="abs" style="left:919.0px;top:67.50px;width:125.0px;height:20.3px;overflow:hidden"><div style="white-space:pre;font-size:13.6px;line-height:21px;color:#fff;text-align:right;padding-right:7px;transform:scaleY(1.09);transform-origin:0 15.4px">-100 000,00</div></div>
<div class="abs" style="left:1044.5px;top:67.50px;width:436.5px;height:20.3px;overflow:hidden"><div style="white-space:pre;font-size:13.6px;line-height:21px;color:#fff;padding-left:4.5px;transform:scaleY(1.09);transform-origin:0 15.4px">66 - 27%-os kulcs alá tartozó belföldi termékbeszerzés,  szolgáltatás után</div></div>
<div class="abs" style="left:1482.5px;top:67.50px;width:27.5px;height:20.3px;overflow:hidden"><div style="white-space:pre;font-size:13.6px;line-height:21px;color:#fff;padding-left:4.5px;transform:scaleY(1.09);transform-origin:0 15.4px">Átutalás</div></div>
<div class="abs" style="left:51.0px;top:88.77px;width:1460px;height:20.3px;background:#f2f2f2"></div>
<div class="abs" style="left:51.0px;top:109.07px;width:1460px;height:1px;background:#dcdcdc"></div>
<div class="abs" style="left:29.5px;top:88.77px;width:123.5px;height:20.3px;overflow:hidden"><div style="white-space:pre;font-size:13.6px;line-height:21px;color:#000;padding-left:4.5px;transform:scaleY(1.09);transform-origin:0 15.4px">2025.01.06.</div></div>
<div class="abs" style="left:154.5px;top:88.77px;width:123.5px;height:20.3px;overflow:hidden"><div style="white-space:pre;font-size:13.6px;line-height:21px;color:#000;padding-left:4.5px;transform:scaleY(1.09);transform-origin:0 15.4px">2025.01.06.</div></div>
<div class="abs" style="left:279.5px;top:88.77px;width:123.5px;height:20.3px;overflow:hidden"><div style="white-space:pre;font-size:13.6px;line-height:21px;color:#000;padding-left:4.5px;transform:scaleY(1.09);transform-origin:0 15.4px">25-ös szla</div></div>
<div class="abs" style="left:529.5px;top:88.77px;width:13.5px;height:20.3px;overflow:hidden"><div style="white-space:pre;font-size:13.6px;line-height:21px;color:#000;padding-left:4.5px;transform:scaleY(1.09);transform-origin:0 15.4px">&quot;H</div></div>
<div class="abs" style="left:544.5px;top:88.77px;width:123.5px;height:20.3px;overflow:hidden"><div style="white-space:pre;font-size:13.6px;line-height:21px;color:#000;padding-left:4.5px;transform:scaleY(1.09);transform-origin:0 15.4px">27%</div></div>
<div class="abs" style="left:669.0px;top:88.77px;width:125.0px;height:20.3px;overflow:hidden"><div style="white-space:pre;font-size:13.6px;line-height:21px;color:#000;text-align:right;padding-right:7px;transform:scaleY(1.09);transform-origin:0 15.4px">7 874,00</div></div>
<div class="abs" style="left:794.0px;top:88.77px;width:125.0px;height:20.3px;overflow:hidden"><div style="white-space:pre;font-size:13.6px;line-height:21px;color:#000;text-align:right;padding-right:7px;transform:scaleY(1.09);transform-origin:0 15.4px">2 126,00</div></div>
<div class="abs" style="left:919.0px;top:88.77px;width:125.0px;height:20.3px;overflow:hidden"><div style="white-space:pre;font-size:13.6px;line-height:21px;color:#000;text-align:right;padding-right:7px;transform:scaleY(1.09);transform-origin:0 15.4px">10 000,00</div></div>
<div class="abs" style="left:1044.5px;top:88.77px;width:436.5px;height:20.3px;overflow:hidden"><div style="white-space:pre;font-size:13.6px;line-height:21px;color:#000;padding-left:4.5px;transform:scaleY(1.09);transform-origin:0 15.4px">7 - 27%-os kulcs alá tartozó értékesítés</div></div>
<div class="abs" style="left:1482.5px;top:88.77px;width:27.5px;height:20.3px;overflow:hidden"><div style="white-space:pre;font-size:13.6px;line-height:21px;color:#000;padding-left:4.5px;transform:scaleY(1.09);transform-origin:0 15.4px">bank</div></div>
<div class="abs" style="left:51.0px;top:110.04px;width:1460px;height:20.3px;background:#ffffff"></div>
<div class="abs" style="left:51.0px;top:130.34px;width:1460px;height:1px;background:#dcdcdc"></div>
<div class="abs" style="left:29.5px;top:110.04px;width:123.5px;height:20.3px;overflow:hidden"><div style="white-space:pre;font-size:13.6px;line-height:21px;color:#000;padding-left:4.5px;transform:scaleY(1.09);transform-origin:0 15.4px">2025.01.06.</div></div>
<div class="abs" style="left:154.5px;top:110.04px;width:123.5px;height:20.3px;overflow:hidden"><div style="white-space:pre;font-size:13.6px;line-height:21px;color:#000;padding-left:4.5px;transform:scaleY(1.09);transform-origin:0 15.4px">2025.01.06.</div></div>
<div class="abs" style="left:279.5px;top:110.04px;width:123.5px;height:20.3px;overflow:hidden"><div style="white-space:pre;font-size:13.6px;line-height:21px;color:#000;padding-left:4.5px;transform:scaleY(1.09);transform-origin:0 15.4px">25-ös sztornó</div></div>
<div class="abs" style="left:404.5px;top:110.04px;width:123.5px;height:20.3px;overflow:hidden"><div style="white-space:pre;font-size:13.6px;line-height:21px;color:#000;padding-left:4.5px;transform:scaleY(1.09);transform-origin:0 15.4px">25-ös szla</div></div>
<div class="abs" style="left:529.5px;top:110.04px;width:13.5px;height:20.3px;overflow:hidden"><div style="white-space:pre;font-size:13.6px;line-height:21px;color:#000;padding-left:4.5px;transform:scaleY(1.09);transform-origin:0 15.4px">&quot;H</div></div>
<div class="abs" style="left:544.5px;top:110.04px;width:123.5px;height:20.3px;overflow:hidden"><div style="white-space:pre;font-size:13.6px;line-height:21px;color:#000;padding-left:4.5px;transform:scaleY(1.09);transform-origin:0 15.4px">27%</div></div>
<div class="abs" style="left:669.0px;top:110.04px;width:125.0px;height:20.3px;overflow:hidden"><div style="white-space:pre;font-size:13.6px;line-height:21px;color:#000;text-align:right;padding-right:7px;transform:scaleY(1.09);transform-origin:0 15.4px">-7 874,00</div></div>
<div class="abs" style="left:794.0px;top:110.04px;width:125.0px;height:20.3px;overflow:hidden"><div style="white-space:pre;font-size:13.6px;line-height:21px;color:#000;text-align:right;padding-right:7px;transform:scaleY(1.09);transform-origin:0 15.4px">-2 126,00</div></div>
<div class="abs" style="left:919.0px;top:110.04px;width:125.0px;height:20.3px;overflow:hidden"><div style="white-space:pre;font-size:13.6px;line-height:21px;color:#000;text-align:right;padding-right:7px;transform:scaleY(1.09);transform-origin:0 15.4px">-10 000,00</div></div>
<div class="abs" style="left:1044.5px;top:110.04px;width:436.5px;height:20.3px;overflow:hidden"><div style="white-space:pre;font-size:13.6px;line-height:21px;color:#000;padding-left:4.5px;transform:scaleY(1.09);transform-origin:0 15.4px">7 - 27%-os kulcs alá tartozó értékesítés</div></div>
<div class="abs" style="left:1482.5px;top:110.04px;width:27.5px;height:20.3px;overflow:hidden"><div style="white-space:pre;font-size:13.6px;line-height:21px;color:#000;padding-left:4.5px;transform:scaleY(1.09);transform-origin:0 15.4px">bank</div></div>
<div class="abs" style="left:51.0px;top:131.31px;width:1460px;height:20.3px;background:#f2f2f2"></div>
<div class="abs" style="left:51.0px;top:151.61px;width:1460px;height:1px;background:#dcdcdc"></div>
<div class="abs" style="left:29.5px;top:131.31px;width:123.5px;height:20.3px;overflow:hidden"><div style="white-space:pre;font-size:13.6px;line-height:21px;color:#000;padding-left:4.5px;transform:scaleY(1.09);transform-origin:0 15.4px">2025.01.06.</div></div>
<div class="abs" style="left:154.5px;top:131.31px;width:123.5px;height:20.3px;overflow:hidden"><div style="white-space:pre;font-size:13.6px;line-height:21px;color:#000;padding-left:4.5px;transform:scaleY(1.09);transform-origin:0 15.4px">2025.01.06.</div></div>
<div class="abs" style="left:279.5px;top:131.31px;width:123.5px;height:20.3px;overflow:hidden"><div style="white-space:pre;font-size:13.6px;line-height:21px;color:#000;padding-left:4.5px;transform:scaleY(1.09);transform-origin:0 15.4px">25-ös újra</div></div>
<div class="abs" style="left:529.5px;top:131.31px;width:13.5px;height:20.3px;overflow:hidden"><div style="white-space:pre;font-size:13.6px;line-height:21px;color:#000;padding-left:4.5px;transform:scaleY(1.09);transform-origin:0 15.4px">&quot;H</div></div>
<div class="abs" style="left:544.5px;top:131.31px;width:123.5px;height:20.3px;overflow:hidden"><div style="white-space:pre;font-size:13.6px;line-height:21px;color:#000;padding-left:4.5px;transform:scaleY(1.09);transform-origin:0 15.4px">27%</div></div>
<div class="abs" style="left:669.0px;top:131.31px;width:125.0px;height:20.3px;overflow:hidden"><div style="white-space:pre;font-size:13.6px;line-height:21px;color:#000;text-align:right;padding-right:7px;transform:scaleY(1.09);transform-origin:0 15.4px">7 874,00</div></div>
<div class="abs" style="left:794.0px;top:131.31px;width:125.0px;height:20.3px;overflow:hidden"><div style="white-space:pre;font-size:13.6px;line-height:21px;color:#000;text-align:right;padding-right:7px;transform:scaleY(1.09);transform-origin:0 15.4px">2 126,00</div></div>
<div class="abs" style="left:919.0px;top:131.31px;width:125.0px;height:20.3px;overflow:hidden"><div style="white-space:pre;font-size:13.6px;line-height:21px;color:#000;text-align:right;padding-right:7px;transform:scaleY(1.09);transform-origin:0 15.4px">10 000,00</div></div>
<div class="abs" style="left:1044.5px;top:131.31px;width:436.5px;height:20.3px;overflow:hidden"><div style="white-space:pre;font-size:13.6px;line-height:21px;color:#000;padding-left:4.5px;transform:scaleY(1.09);transform-origin:0 15.4px">7 - 27%-os kulcs alá tartozó értékesítés</div></div>
<div class="abs" style="left:1482.5px;top:131.31px;width:27.5px;height:20.3px;overflow:hidden"><div style="white-space:pre;font-size:13.6px;line-height:21px;color:#000;padding-left:4.5px;transform:scaleY(1.09);transform-origin:0 15.4px">bank</div></div>
<div class="abs" style="left:51.0px;top:152.58px;width:1460px;height:20.3px;background:#ffffff"></div>
<div class="abs" style="left:51.0px;top:172.88px;width:1460px;height:1px;background:#dcdcdc"></div>
<div class="abs" style="left:29.5px;top:152.58px;width:123.5px;height:20.3px;overflow:hidden"><div style="white-space:pre;font-size:13.6px;line-height:21px;color:#000;padding-left:4.5px;transform:scaleY(1.09);transform-origin:0 15.4px">2025.01.10.</div></div>
<div class="abs" style="left:154.5px;top:152.58px;width:123.5px;height:20.3px;overflow:hidden"><div style="white-space:pre;font-size:13.6px;line-height:21px;color:#000;padding-left:4.5px;transform:scaleY(1.09);transform-origin:0 15.4px">2025.01.10.</div></div>
<div class="abs" style="left:279.5px;top:152.58px;width:123.5px;height:20.3px;overflow:hidden"><div style="white-space:pre;font-size:13.6px;line-height:21px;color:#000;padding-left:4.5px;transform:scaleY(1.09);transform-origin:0 15.4px">2025/00002</div></div>
<div class="abs" style="left:404.5px;top:152.58px;width:123.5px;height:20.3px;overflow:hidden"><div style="white-space:pre;font-size:13.6px;line-height:21px;color:#000;padding-left:4.5px;transform:scaleY(1.09);transform-origin:0 15.4px">2025 devizás</div></div>
<div class="abs" style="left:529.5px;top:152.58px;width:13.5px;height:20.3px;overflow:hidden"><div style="white-space:pre;font-size:13.6px;line-height:21px;color:#000;padding-left:4.5px;transform:scaleY(1.09);transform-origin:0 15.4px">&quot;T</div></div>
<div class="abs" style="left:544.5px;top:152.58px;width:123.5px;height:20.3px;overflow:hidden"><div style="white-space:pre;font-size:13.6px;line-height:21px;color:#000;padding-left:4.5px;transform:scaleY(1.09);transform-origin:0 15.4px">27%</div></div>
<div class="abs" style="left:669.0px;top:152.58px;width:125.0px;height:20.3px;overflow:hidden"><div style="white-space:pre;font-size:13.6px;line-height:21px;color:#000;text-align:right;padding-right:7px;transform:scaleY(1.09);transform-origin:0 15.4px">-413 800,00</div></div>
<div class="abs" style="left:794.0px;top:152.58px;width:125.0px;height:20.3px;overflow:hidden"><div style="white-space:pre;font-size:13.6px;line-height:21px;color:#000;text-align:right;padding-right:7px;transform:scaleY(1.09);transform-origin:0 15.4px">-111 726,00</div></div>
<div class="abs" style="left:919.0px;top:152.58px;width:125.0px;height:20.3px;overflow:hidden"><div style="white-space:pre;font-size:13.6px;line-height:21px;color:#000;text-align:right;padding-right:7px;transform:scaleY(1.09);transform-origin:0 15.4px">-525 526,00</div></div>
<div class="abs" style="left:1044.5px;top:152.58px;width:436.5px;height:20.3px;overflow:hidden"><div style="white-space:pre;font-size:13.6px;line-height:21px;color:#000;padding-left:4.5px;transform:scaleY(1.09);transform-origin:0 15.4px">66 - 27%-os kulcs alá tartozó belföldi termékbeszerzés,  szolgáltatás után</div></div>
<div class="abs" style="left:1482.5px;top:152.58px;width:27.5px;height:20.3px;overflow:hidden"><div style="white-space:pre;font-size:13.6px;line-height:21px;color:#000;padding-left:4.5px;transform:scaleY(1.09);transform-origin:0 15.4px">Átutalás</div></div>
<div class="abs" style="left:51.0px;top:173.85px;width:1460px;height:20.3px;background:#f2f2f2"></div>
<div class="abs" style="left:51.0px;top:194.15px;width:1460px;height:1px;background:#dcdcdc"></div>
<div class="abs" style="left:29.5px;top:173.85px;width:123.5px;height:20.3px;overflow:hidden"><div style="white-space:pre;font-size:13.6px;line-height:21px;color:#000;padding-left:4.5px;transform:scaleY(1.09);transform-origin:0 15.4px">2024.12.01.</div></div>
<div class="abs" style="left:154.5px;top:173.85px;width:123.5px;height:20.3px;overflow:hidden"><div style="white-space:pre;font-size:13.6px;line-height:21px;color:#000;padding-left:4.5px;transform:scaleY(1.09);transform-origin:0 15.4px">2025.01.15.</div></div>
<div class="abs" style="left:279.5px;top:173.85px;width:123.5px;height:20.3px;overflow:hidden"><div style="white-space:pre;font-size:13.6px;line-height:21px;color:#000;padding-left:4.5px;transform:scaleY(1.09);transform-origin:0 15.4px">2025/00003</div></div>
<div class="abs" style="left:404.5px;top:173.85px;width:123.5px;height:20.3px;overflow:hidden"><div style="white-space:pre;font-size:13.6px;line-height:21px;color:#000;padding-left:4.5px;transform:scaleY(1.09);transform-origin:0 15.4px">kiegyenlített</div></div>
<div class="abs" style="left:529.5px;top:173.85px;width:13.5px;height:20.3px;overflow:hidden"><div style="white-space:pre;font-size:13.6px;line-height:21px;color:#000;padding-left:4.5px;transform:scaleY(1.09);transform-origin:0 15.4px">D</div></div>
<div class="abs" style="left:544.5px;top:173.85px;width:123.5px;height:20.3px;overflow:hidden"><div style="white-space:pre;font-size:13.6px;line-height:21px;color:#000;padding-left:4.5px;transform:scaleY(1.09);transform-origin:0 15.4px">27%</div></div>
<div class="abs" style="left:669.0px;top:173.85px;width:125.0px;height:20.3px;overflow:hidden"><div style="white-space:pre;font-size:13.6px;line-height:21px;color:#000;text-align:right;padding-right:7px;transform:scaleY(1.09);transform-origin:0 15.4px">-62 992,00</div></div>
<div class="abs" style="left:794.0px;top:173.85px;width:125.0px;height:20.3px;overflow:hidden"><div style="white-space:pre;font-size:13.6px;line-height:21px;color:#000;text-align:right;padding-right:7px;transform:scaleY(1.09);transform-origin:0 15.4px">-17 008,00</div></div>
<div class="abs" style="left:919.0px;top:173.85px;width:125.0px;height:20.3px;overflow:hidden"><div style="white-space:pre;font-size:13.6px;line-height:21px;color:#000;text-align:right;padding-right:7px;transform:scaleY(1.09);transform-origin:0 15.4px">-80 000,00</div></div>
<div class="abs" style="left:1044.5px;top:173.85px;width:436.5px;height:20.3px;overflow:hidden"><div style="white-space:pre;font-size:13.6px;line-height:21px;color:#000;padding-left:4.5px;transform:scaleY(1.09);transform-origin:0 15.4px">66 - 27%-os kulcs alá tartozó belföldi termékbeszerzés,  szolgáltatás után</div></div>
<div class="abs" style="left:1482.5px;top:173.85px;width:27.5px;height:20.3px;overflow:hidden"><div style="white-space:pre;font-size:13.6px;line-height:21px;color:#000;padding-left:4.5px;transform:scaleY(1.09);transform-origin:0 15.4px">Átutalás</div></div>
<div class="abs" style="left:51.0px;top:195.12px;width:1460px;height:20.3px;background:#ffffff"></div>
<div class="abs" style="left:51.0px;top:215.42px;width:1460px;height:1px;background:#dcdcdc"></div>
<div class="abs" style="left:29.5px;top:195.12px;width:123.5px;height:20.3px;overflow:hidden"><div style="white-space:pre;font-size:13.6px;line-height:21px;color:#000;padding-left:4.5px;transform:scaleY(1.09);transform-origin:0 15.4px">2025.01.20.</div></div>
<div class="abs" style="left:154.5px;top:195.12px;width:123.5px;height:20.3px;overflow:hidden"><div style="white-space:pre;font-size:13.6px;line-height:21px;color:#000;padding-left:4.5px;transform:scaleY(1.09);transform-origin:0 15.4px">2024.12.19.</div></div>
<div class="abs" style="left:279.5px;top:195.12px;width:123.5px;height:20.3px;overflow:hidden"><div style="white-space:pre;font-size:13.6px;line-height:21px;color:#000;padding-left:4.5px;transform:scaleY(1.09);transform-origin:0 15.4px">új24/027</div></div>
<div class="abs" style="left:529.5px;top:195.12px;width:13.5px;height:20.3px;overflow:hidden"><div style="white-space:pre;font-size:13.6px;line-height:21px;color:#000;padding-left:4.5px;transform:scaleY(1.09);transform-origin:0 15.4px">&quot;H</div></div>
<div class="abs" style="left:544.5px;top:195.12px;width:123.5px;height:20.3px;overflow:hidden"><div style="white-space:pre;font-size:13.6px;line-height:21px;color:#000;padding-left:4.5px;transform:scaleY(1.09);transform-origin:0 15.4px">27%</div></div>
<div class="abs" style="left:669.0px;top:195.12px;width:125.0px;height:20.3px;overflow:hidden"><div style="white-space:pre;font-size:13.6px;line-height:21px;color:#000;text-align:right;padding-right:7px;transform:scaleY(1.09);transform-origin:0 15.4px">10 000,00</div></div>
<div class="abs" style="left:794.0px;top:195.12px;width:125.0px;height:20.3px;overflow:hidden"><div style="white-space:pre;font-size:13.6px;line-height:21px;color:#000;text-align:right;padding-right:7px;transform:scaleY(1.09);transform-origin:0 15.4px">2 700,00</div></div>
<div class="abs" style="left:919.0px;top:195.12px;width:125.0px;height:20.3px;overflow:hidden"><div style="white-space:pre;font-size:13.6px;line-height:21px;color:#000;text-align:right;padding-right:7px;transform:scaleY(1.09);transform-origin:0 15.4px">12 700,00</div></div>
<div class="abs" style="left:1044.5px;top:195.12px;width:436.5px;height:20.3px;overflow:hidden"><div style="white-space:pre;font-size:13.6px;line-height:21px;color:#000;padding-left:4.5px;transform:scaleY(1.09);transform-origin:0 15.4px">7 - 27%-os kulcs alá tartozó értékesítés</div></div>
<div class="abs" style="left:1482.5px;top:195.12px;width:27.5px;height:20.3px;overflow:hidden"><div style="white-space:pre;font-size:13.6px;line-height:21px;color:#000;padding-left:4.5px;transform:scaleY(1.09);transform-origin:0 15.4px">bank</div></div>
<div class="abs" style="left:51.0px;top:216.39px;width:1460px;height:20.3px;background:#f2f2f2"></div>
<div class="abs" style="left:51.0px;top:236.69px;width:1460px;height:1px;background:#dcdcdc"></div>
<div class="abs" style="left:29.5px;top:216.39px;width:123.5px;height:20.3px;overflow:hidden"><div style="white-space:pre;font-size:13.6px;line-height:21px;color:#000;padding-left:4.5px;transform:scaleY(1.09);transform-origin:0 15.4px">2025.02.02.</div></div>
<div class="abs" style="left:154.5px;top:216.39px;width:123.5px;height:20.3px;overflow:hidden"><div style="white-space:pre;font-size:13.6px;line-height:21px;color:#000;padding-left:4.5px;transform:scaleY(1.09);transform-origin:0 15.4px">2025.02.02.</div></div>
<div class="abs" style="left:279.5px;top:216.39px;width:123.5px;height:20.3px;overflow:hidden"><div style="white-space:pre;font-size:13.6px;line-height:21px;color:#000;padding-left:4.5px;transform:scaleY(1.09);transform-origin:0 15.4px">2025/00009</div></div>
<div class="abs" style="left:404.5px;top:216.39px;width:123.5px;height:20.3px;overflow:hidden"><div style="white-space:pre;font-size:13.6px;line-height:21px;color:#000;padding-left:4.5px;transform:scaleY(1.09);transform-origin:0 15.4px">FAD-5</div></div>
<div class="abs" style="left:529.5px;top:216.39px;width:13.5px;height:20.3px;overflow:hidden"><div style="white-space:pre;font-size:13.6px;line-height:21px;color:#000;padding-left:4.5px;transform:scaleY(1.09);transform-origin:0 15.4px">2l</div></div>
<div class="abs" style="left:544.5px;top:216.39px;width:123.5px;height:20.3px;overflow:hidden"><div style="white-space:pre;font-size:13.6px;line-height:21px;color:#000;padding-left:4.5px;transform:scaleY(1.09);transform-origin:0 15.4px">FADBESZ-5</div></div>
<div class="abs" style="left:669.0px;top:216.39px;width:125.0px;height:20.3px;overflow:hidden"><div style="white-space:pre;font-size:13.6px;line-height:21px;color:#000;text-align:right;padding-right:7px;transform:scaleY(1.09);transform-origin:0 15.4px">-10 000,00</div></div>
<div class="abs" style="left:794.0px;top:216.39px;width:125.0px;height:20.3px;overflow:hidden"><div style="white-space:pre;font-size:13.6px;line-height:21px;color:#000;text-align:right;padding-right:7px;transform:scaleY(1.09);transform-origin:0 15.4px">0,00</div></div>
<div class="abs" style="left:919.0px;top:216.39px;width:125.0px;height:20.3px;overflow:hidden"><div style="white-space:pre;font-size:13.6px;line-height:21px;color:#000;text-align:right;padding-right:7px;transform:scaleY(1.09);transform-origin:0 15.4px">-10 000,00</div></div>
<div class="abs" style="left:1044.5px;top:216.39px;width:436.5px;height:20.3px;overflow:hidden"><div style="white-space:pre;font-size:13.6px;line-height:21px;color:#000;padding-left:4.5px;transform:scaleY(1.09);transform-origin:0 15.4px">64 - 5%-os kulcs alá tartozó belföldi termékbeszerzés, szolgáltatás után</div></div>
<div class="abs" style="left:1482.5px;top:216.39px;width:27.5px;height:20.3px;overflow:hidden"><div style="white-space:pre;font-size:13.6px;line-height:21px;color:#000;padding-left:4.5px;transform:scaleY(1.09);transform-origin:0 15.4px">Átutalás</div></div>
<div class="abs" style="left:51.0px;top:237.66px;width:1460px;height:20.3px;background:#ffffff"></div>
<div class="abs" style="left:51.0px;top:257.96px;width:1460px;height:1px;background:#dcdcdc"></div>
<div class="abs" style="left:29.5px;top:237.66px;width:123.5px;height:20.3px;overflow:hidden"><div style="white-space:pre;font-size:13.6px;line-height:21px;color:#000;padding-left:4.5px;transform:scaleY(1.09);transform-origin:0 15.4px">2025.02.02.</div></div>
<div class="abs" style="left:154.5px;top:237.66px;width:123.5px;height:20.3px;overflow:hidden"><div style="white-space:pre;font-size:13.6px;line-height:21px;color:#000;padding-left:4.5px;transform:scaleY(1.09);transform-origin:0 15.4px">2025.02.02.</div></div>
<div class="abs" style="left:279.5px;top:237.66px;width:123.5px;height:20.3px;overflow:hidden"><div style="white-space:pre;font-size:13.6px;line-height:21px;color:#000;padding-left:4.5px;transform:scaleY(1.09);transform-origin:0 15.4px">2025/00009</div></div>
<div class="abs" style="left:404.5px;top:237.66px;width:123.5px;height:20.3px;overflow:hidden"><div style="white-space:pre;font-size:13.6px;line-height:21px;color:#000;padding-left:4.5px;transform:scaleY(1.09);transform-origin:0 15.4px">FAD-5</div></div>
<div class="abs" style="left:529.5px;top:237.66px;width:13.5px;height:20.3px;overflow:hidden"><div style="white-space:pre;font-size:13.6px;line-height:21px;color:#000;padding-left:4.5px;transform:scaleY(1.09);transform-origin:0 15.4px">2l</div></div>
<div class="abs" style="left:544.5px;top:237.66px;width:123.5px;height:20.3px;overflow:hidden"><div style="white-space:pre;font-size:13.6px;line-height:21px;color:#000;padding-left:4.5px;transform:scaleY(1.09);transform-origin:0 15.4px">FADBESZ-5</div></div>
<div class="abs" style="left:669.0px;top:237.66px;width:125.0px;height:20.3px;overflow:hidden"><div style="white-space:pre;font-size:13.6px;line-height:21px;color:#000;text-align:right;padding-right:7px;transform:scaleY(1.09);transform-origin:0 15.4px">10 000,00</div></div>
<div class="abs" style="left:794.0px;top:237.66px;width:125.0px;height:20.3px;overflow:hidden"><div style="white-space:pre;font-size:13.6px;line-height:21px;color:#000;text-align:right;padding-right:7px;transform:scaleY(1.09);transform-origin:0 15.4px">0,00</div></div>
<div class="abs" style="left:919.0px;top:237.66px;width:125.0px;height:20.3px;overflow:hidden"><div style="white-space:pre;font-size:13.6px;line-height:21px;color:#000;text-align:right;padding-right:7px;transform:scaleY(1.09);transform-origin:0 15.4px">10 000,00</div></div>
<div class="abs" style="left:1044.5px;top:237.66px;width:436.5px;height:20.3px;overflow:hidden"><div style="white-space:pre;font-size:13.6px;line-height:21px;color:#000;padding-left:4.5px;transform:scaleY(1.09);transform-origin:0 15.4px">29 - Az ÁFA tv. 142.§-a alapján a fordított adózás szabályai szerint fizetendő</div></div>
<div class="abs" style="left:1482.5px;top:237.66px;width:27.5px;height:20.3px;overflow:hidden"><div style="white-space:pre;font-size:13.6px;line-height:21px;color:#000;padding-left:4.5px;transform:scaleY(1.09);transform-origin:0 15.4px">Átutalás</div></div>
<div class="abs" style="left:51.0px;top:258.93px;width:1460px;height:20.3px;background:#f2f2f2"></div>
<div class="abs" style="left:51.0px;top:279.23px;width:1460px;height:1px;background:#dcdcdc"></div>
<div class="abs" style="left:29.5px;top:258.93px;width:123.5px;height:20.3px;overflow:hidden"><div style="white-space:pre;font-size:13.6px;line-height:21px;color:#000;padding-left:4.5px;transform:scaleY(1.09);transform-origin:0 15.4px">2025.02.03.</div></div>
<div class="abs" style="left:154.5px;top:258.93px;width:123.5px;height:20.3px;overflow:hidden"><div style="white-space:pre;font-size:13.6px;line-height:21px;color:#000;padding-left:4.5px;transform:scaleY(1.09);transform-origin:0 15.4px">2025.02.03.</div></div>
<div class="abs" style="left:279.5px;top:258.93px;width:123.5px;height:20.3px;overflow:hidden"><div style="white-space:pre;font-size:13.6px;line-height:21px;color:#000;padding-left:4.5px;transform:scaleY(1.09);transform-origin:0 15.4px">új25/001</div></div>
<div class="abs" style="left:404.5px;top:258.93px;width:123.5px;height:20.3px;overflow:hidden"><div style="white-space:pre;font-size:13.6px;line-height:21px;color:#000;padding-left:4.5px;transform:scaleY(1.09);transform-origin:0 15.4px">2024/00020</div></div>
<div class="abs" style="left:529.5px;top:258.93px;width:13.5px;height:20.3px;overflow:hidden"><div style="white-space:pre;font-size:13.6px;line-height:21px;color:#000;padding-left:4.5px;transform:scaleY(1.09);transform-origin:0 15.4px">&quot;H</div></div>
<div class="abs" style="left:544.5px;top:258.93px;width:123.5px;height:20.3px;overflow:hidden"><div style="white-space:pre;font-size:13.6px;line-height:21px;color:#000;padding-left:4.5px;transform:scaleY(1.09);transform-origin:0 15.4px">27%</div></div>
<div class="abs" style="left:669.0px;top:258.93px;width:125.0px;height:20.3px;overflow:hidden"><div style="white-space:pre;font-size:13.6px;line-height:21px;color:#000;text-align:right;padding-right:7px;transform:scaleY(1.09);transform-origin:0 15.4px">-50 000,00</div></div>
<div class="abs" style="left:794.0px;top:258.93px;width:125.0px;height:20.3px;overflow:hidden"><div style="white-space:pre;font-size:13.6px;line-height:21px;color:#000;text-align:right;padding-right:7px;transform:scaleY(1.09);transform-origin:0 15.4px">-13 500,00</div></div>
<div class="abs" style="left:919.0px;top:258.93px;width:125.0px;height:20.3px;overflow:hidden"><div style="white-space:pre;font-size:13.6px;line-height:21px;color:#000;text-align:right;padding-right:7px;transform:scaleY(1.09);transform-origin:0 15.4px">-63 500,00</div></div>
<div class="abs" style="left:1044.5px;top:258.93px;width:436.5px;height:20.3px;overflow:hidden"><div style="white-space:pre;font-size:13.6px;line-height:21px;color:#000;padding-left:4.5px;transform:scaleY(1.09);transform-origin:0 15.4px">7 - 27%-os kulcs alá tartozó értékesítés</div></div>
<div class="abs" style="left:1482.5px;top:258.93px;width:27.5px;height:20.3px;overflow:hidden"><div style="white-space:pre;font-size:13.6px;line-height:21px;color:#000;padding-left:4.5px;transform:scaleY(1.09);transform-origin:0 15.4px">Átutalás</div></div>
<div class="abs" style="left:51.0px;top:280.20px;width:1460px;height:20.3px;background:#ffffff"></div>
<div class="abs" style="left:51.0px;top:300.50px;width:1460px;height:1px;background:#dcdcdc"></div>
<div class="abs" style="left:29.5px;top:280.20px;width:123.5px;height:20.3px;overflow:hidden"><div style="white-space:pre;font-size:13.6px;line-height:21px;color:#000;padding-left:4.5px;transform:scaleY(1.09);transform-origin:0 15.4px">2025.02.03.</div></div>
<div class="abs" style="left:154.5px;top:280.20px;width:123.5px;height:20.3px;overflow:hidden"><div style="white-space:pre;font-size:13.6px;line-height:21px;color:#000;padding-left:4.5px;transform:scaleY(1.09);transform-origin:0 15.4px">2025.02.03.</div></div>
<div class="abs" style="left:279.5px;top:280.20px;width:123.5px;height:20.3px;overflow:hidden"><div style="white-space:pre;font-size:13.6px;line-height:21px;color:#000;padding-left:4.5px;transform:scaleY(1.09);transform-origin:0 15.4px">új25/004</div></div>
<div class="abs" style="left:404.5px;top:280.20px;width:123.5px;height:20.3px;overflow:hidden"><div style="white-space:pre;font-size:13.6px;line-height:21px;color:#000;padding-left:4.5px;transform:scaleY(1.09);transform-origin:0 15.4px">2023/00004</div></div>
<div class="abs" style="left:529.5px;top:280.20px;width:13.5px;height:20.3px;overflow:hidden"><div style="white-space:pre;font-size:13.6px;line-height:21px;color:#000;padding-left:4.5px;transform:scaleY(1.09);transform-origin:0 15.4px">&quot;H</div></div>
<div class="abs" style="left:544.5px;top:280.20px;width:123.5px;height:20.3px;overflow:hidden"><div style="white-space:pre;font-size:13.6px;line-height:21px;color:#000;padding-left:4.5px;transform:scaleY(1.09);transform-origin:0 15.4px">27%</div></div>
<div class="abs" style="left:669.0px;top:280.20px;width:125.0px;height:20.3px;overflow:hidden"><div style="white-space:pre;font-size:13.6px;line-height:21px;color:#000;text-align:right;padding-right:7px;transform:scaleY(1.09);transform-origin:0 15.4px">-500 000,00</div></div>
<div class="abs" style="left:794.0px;top:280.20px;width:125.0px;height:20.3px;overflow:hidden"><div style="white-space:pre;font-size:13.6px;line-height:21px;color:#000;text-align:right;padding-right:7px;transform:scaleY(1.09);transform-origin:0 15.4px">-135 000,00</div></div>
<div class="abs" style="left:919.0px;top:280.20px;width:125.0px;height:20.3px;overflow:hidden"><div style="white-space:pre;font-size:13.6px;line-height:21px;color:#000;text-align:right;padding-right:7px;transform:scaleY(1.09);transform-origin:0 15.4px">-635 000,00</div></div>
<div class="abs" style="left:1044.5px;top:280.20px;width:436.5px;height:20.3px;overflow:hidden"><div style="white-space:pre;font-size:13.6px;line-height:21px;color:#000;padding-left:4.5px;transform:scaleY(1.09);transform-origin:0 15.4px">7 - 27%-os kulcs alá tartozó értékesítés</div></div>
<div class="abs" style="left:1482.5px;top:280.20px;width:27.5px;height:20.3px;overflow:hidden"><div style="white-space:pre;font-size:13.6px;line-height:21px;color:#000;padding-left:4.5px;transform:scaleY(1.09);transform-origin:0 15.4px">bank</div></div>
<div class="abs" style="left:51.0px;top:301.47px;width:1460px;height:20.3px;background:#f2f2f2"></div>
<div class="abs" style="left:51.0px;top:321.77px;width:1460px;height:1px;background:#dcdcdc"></div>
<div class="abs" style="left:29.5px;top:301.47px;width:123.5px;height:20.3px;overflow:hidden"><div style="white-space:pre;font-size:13.6px;line-height:21px;color:#000;padding-left:4.5px;transform:scaleY(1.09);transform-origin:0 15.4px">2025.02.03.</div></div>
<div class="abs" style="left:154.5px;top:301.47px;width:123.5px;height:20.3px;overflow:hidden"><div style="white-space:pre;font-size:13.6px;line-height:21px;color:#000;padding-left:4.5px;transform:scaleY(1.09);transform-origin:0 15.4px">2025.02.03.</div></div>
<div class="abs" style="left:279.5px;top:301.47px;width:123.5px;height:20.3px;overflow:hidden"><div style="white-space:pre;font-size:13.6px;line-height:21px;color:#000;padding-left:4.5px;transform:scaleY(1.09);transform-origin:0 15.4px">új25/005</div></div>
<div class="abs" style="left:404.5px;top:301.47px;width:123.5px;height:20.3px;overflow:hidden"><div style="white-space:pre;font-size:13.6px;line-height:21px;color:#000;padding-left:4.5px;transform:scaleY(1.09);transform-origin:0 15.4px">2023/00045</div></div>
<div class="abs" style="left:529.5px;top:301.47px;width:13.5px;height:20.3px;overflow:hidden"><div style="white-space:pre;font-size:13.6px;line-height:21px;color:#000;padding-left:4.5px;transform:scaleY(1.09);transform-origin:0 15.4px">&quot;H</div></div>
<div class="abs" style="left:544.5px;top:301.47px;width:123.5px;height:20.3px;overflow:hidden"><div style="white-space:pre;font-size:13.6px;line-height:21px;color:#000;padding-left:4.5px;transform:scaleY(1.09);transform-origin:0 15.4px">27%</div></div>
<div class="abs" style="left:669.0px;top:301.47px;width:125.0px;height:20.3px;overflow:hidden"><div style="white-space:pre;font-size:13.6px;line-height:21px;color:#000;text-align:right;padding-right:7px;transform:scaleY(1.09);transform-origin:0 15.4px">-5 000,00</div></div>
<div class="abs" style="left:794.0px;top:301.47px;width:125.0px;height:20.3px;overflow:hidden"><div style="white-space:pre;font-size:13.6px;line-height:21px;color:#000;text-align:right;padding-right:7px;transform:scaleY(1.09);transform-origin:0 15.4px">-1 350,00</div></div>
<div class="abs" style="left:919.0px;top:301.47px;width:125.0px;height:20.3px;overflow:hidden"><div style="white-space:pre;font-size:13.6px;line-height:21px;color:#000;text-align:right;padding-right:7px;transform:scaleY(1.09);transform-origin:0 15.4px">-6 350,00</div></div>
<div class="abs" style="left:1044.5px;top:301.47px;width:436.5px;height:20.3px;overflow:hidden"><div style="white-space:pre;font-size:13.6px;line-height:21px;color:#000;padding-left:4.5px;transform:scaleY(1.09);transform-origin:0 15.4px">7 - 27%-os kulcs alá tartozó értékesítés</div></div>
<div class="abs" style="left:1482.5px;top:301.47px;width:27.5px;height:20.3px;overflow:hidden"><div style="white-space:pre;font-size:13.6px;line-height:21px;color:#000;padding-left:4.5px;transform:scaleY(1.09);transform-origin:0 15.4px">bank</div></div>
<div class="abs" style="left:51.0px;top:322.74px;width:1460px;height:20.3px;background:#ffffff"></div>
<div class="abs" style="left:51.0px;top:343.04px;width:1460px;height:1px;background:#dcdcdc"></div>
<div class="abs" style="left:29.5px;top:322.74px;width:123.5px;height:20.3px;overflow:hidden"><div style="white-space:pre;font-size:13.6px;line-height:21px;color:#000;padding-left:4.5px;transform:scaleY(1.09);transform-origin:0 15.4px">2025.02.04.</div></div>
<div class="abs" style="left:154.5px;top:322.74px;width:123.5px;height:20.3px;overflow:hidden"><div style="white-space:pre;font-size:13.6px;line-height:21px;color:#000;padding-left:4.5px;transform:scaleY(1.09);transform-origin:0 15.4px">2025.02.04.</div></div>
<div class="abs" style="left:279.5px;top:322.74px;width:123.5px;height:20.3px;overflow:hidden"><div style="white-space:pre;font-size:13.6px;line-height:21px;color:#000;padding-left:4.5px;transform:scaleY(1.09);transform-origin:0 15.4px">2025/00004</div></div>
<div class="abs" style="left:404.5px;top:322.74px;width:123.5px;height:20.3px;overflow:hidden"><div style="white-space:pre;font-size:13.6px;line-height:21px;color:#000;padding-left:4.5px;transform:scaleY(1.09);transform-origin:0 15.4px">2023/00019_</div></div>
<div class="abs" style="left:529.5px;top:322.74px;width:13.5px;height:20.3px;overflow:hidden"><div style="white-space:pre;font-size:13.6px;line-height:21px;color:#000;padding-left:4.5px;transform:scaleY(1.09);transform-origin:0 15.4px">C</div></div>
<div class="abs" style="left:544.5px;top:322.74px;width:123.5px;height:20.3px;overflow:hidden"><div style="white-space:pre;font-size:13.6px;line-height:21px;color:#000;padding-left:4.5px;transform:scaleY(1.09);transform-origin:0 15.4px">27%</div></div>
<div class="abs" style="left:669.0px;top:322.74px;width:125.0px;height:20.3px;overflow:hidden"><div style="white-space:pre;font-size:13.6px;line-height:21px;color:#000;text-align:right;padding-right:7px;transform:scaleY(1.09);transform-origin:0 15.4px">70 000,00</div></div>
<div class="abs" style="left:794.0px;top:322.74px;width:125.0px;height:20.3px;overflow:hidden"><div style="white-space:pre;font-size:13.6px;line-height:21px;color:#000;text-align:right;padding-right:7px;transform:scaleY(1.09);transform-origin:0 15.4px">18 900,00</div></div>
<div class="abs" style="left:919.0px;top:322.74px;width:125.0px;height:20.3px;overflow:hidden"><div style="white-space:pre;font-size:13.6px;line-height:21px;color:#000;text-align:right;padding-right:7px;transform:scaleY(1.09);transform-origin:0 15.4px">88 900,00</div></div>
<div class="abs" style="left:1044.5px;top:322.74px;width:436.5px;height:20.3px;overflow:hidden"><div style="white-space:pre;font-size:13.6px;line-height:21px;color:#000;padding-left:4.5px;transform:scaleY(1.09);transform-origin:0 15.4px">66 - 27%-os kulcs alá tartozó belföldi termékbeszerzés,  szolgáltatás után</div></div>
<div class="abs" style="left:1482.5px;top:322.74px;width:27.5px;height:20.3px;overflow:hidden"><div style="white-space:pre;font-size:13.6px;line-height:21px;color:#000;padding-left:4.5px;transform:scaleY(1.09);transform-origin:0 15.4px">Átutalás</div></div>
<div class="abs" style="left:51.0px;top:344.01px;width:1460px;height:20.3px;background:#f2f2f2"></div>
<div class="abs" style="left:51.0px;top:364.31px;width:1460px;height:1px;background:#dcdcdc"></div>
<div class="abs" style="left:29.5px;top:344.01px;width:123.5px;height:20.3px;overflow:hidden"><div style="white-space:pre;font-size:13.6px;line-height:21px;color:#000;padding-left:4.5px;transform:scaleY(1.09);transform-origin:0 15.4px">2025.02.04.</div></div>
<div class="abs" style="left:154.5px;top:344.01px;width:123.5px;height:20.3px;overflow:hidden"><div style="white-space:pre;font-size:13.6px;line-height:21px;color:#000;padding-left:4.5px;transform:scaleY(1.09);transform-origin:0 15.4px">2025.02.04.</div></div>
<div class="abs" style="left:279.5px;top:344.01px;width:123.5px;height:20.3px;overflow:hidden"><div style="white-space:pre;font-size:13.6px;line-height:21px;color:#000;padding-left:4.5px;transform:scaleY(1.09);transform-origin:0 15.4px">GREEN-2024-10_</div></div>
<div class="abs" style="left:404.5px;top:344.01px;width:123.5px;height:20.3px;overflow:hidden"><div style="white-space:pre;font-size:13.6px;line-height:21px;color:#000;padding-left:4.5px;transform:scaleY(1.09);transform-origin:0 15.4px">GREEN-2024-10</div></div>
<div class="abs" style="left:529.5px;top:344.01px;width:13.5px;height:20.3px;overflow:hidden"><div style="white-space:pre;font-size:13.6px;line-height:21px;color:#000;padding-left:4.5px;transform:scaleY(1.09);transform-origin:0 15.4px">M</div></div>
<div class="abs" style="left:544.5px;top:344.01px;width:123.5px;height:20.3px;overflow:hidden"><div style="white-space:pre;font-size:13.6px;line-height:21px;color:#000;padding-left:4.5px;transform:scaleY(1.09);transform-origin:0 15.4px">27%</div></div>
<div class="abs" style="left:669.0px;top:344.01px;width:125.0px;height:20.3px;overflow:hidden"><div style="white-space:pre;font-size:13.6px;line-height:21px;color:#000;text-align:right;padding-right:7px;transform:scaleY(1.09);transform-origin:0 15.4px">-33 189,00</div></div>
<div class="abs" style="left:794.0px;top:344.01px;width:125.0px;height:20.3px;overflow:hidden"><div style="white-space:pre;font-size:13.6px;line-height:21px;color:#000;text-align:right;padding-right:7px;transform:scaleY(1.09);transform-origin:0 15.4px">-8 961,00</div></div>
<div class="abs" style="left:919.0px;top:344.01px;width:125.0px;height:20.3px;overflow:hidden"><div style="white-space:pre;font-size:13.6px;line-height:21px;color:#000;text-align:right;padding-right:7px;transform:scaleY(1.09);transform-origin:0 15.4px">-42 150,00</div></div>
<div class="abs" style="left:1044.5px;top:344.01px;width:436.5px;height:20.3px;overflow:hidden"><div style="white-space:pre;font-size:13.6px;line-height:21px;color:#000;padding-left:4.5px;transform:scaleY(1.09);transform-origin:0 15.4px">7 - 27%-os kulcs alá tartozó értékesítés</div></div>
<div class="abs" style="left:1482.5px;top:344.01px;width:27.5px;height:20.3px;overflow:hidden"><div style="white-space:pre;font-size:13.6px;line-height:21px;color:#000;padding-left:4.5px;transform:scaleY(1.09);transform-origin:0 15.4px">Átutalás</div></div>
<div class="abs" style="left:51.0px;top:365.28px;width:1460px;height:20.3px;background:#ffffff"></div>
<div class="abs" style="left:51.0px;top:385.58px;width:1460px;height:1px;background:#dcdcdc"></div>
<div class="abs" style="left:29.5px;top:365.28px;width:123.5px;height:20.3px;overflow:hidden"><div style="white-space:pre;font-size:13.6px;line-height:21px;color:#000;padding-left:4.5px;transform:scaleY(1.09);transform-origin:0 15.4px">2025.02.06.</div></div>
<div class="abs" style="left:154.5px;top:365.28px;width:123.5px;height:20.3px;overflow:hidden"><div style="white-space:pre;font-size:13.6px;line-height:21px;color:#000;padding-left:4.5px;transform:scaleY(1.09);transform-origin:0 15.4px">2025.02.06.</div></div>
<div class="abs" style="left:279.5px;top:365.28px;width:123.5px;height:20.3px;overflow:hidden"><div style="white-space:pre;font-size:13.6px;line-height:21px;color:#000;padding-left:4.5px;transform:scaleY(1.09);transform-origin:0 15.4px">2025/00005</div></div>
<div class="abs" style="left:404.5px;top:365.28px;width:123.5px;height:20.3px;overflow:hidden"><div style="white-space:pre;font-size:13.6px;line-height:21px;color:#000;padding-left:4.5px;transform:scaleY(1.09);transform-origin:0 15.4px">111</div></div>
<div class="abs" style="left:529.5px;top:365.28px;width:13.5px;height:20.3px;overflow:hidden"><div style="white-space:pre;font-size:13.6px;line-height:21px;color:#000;padding-left:4.5px;transform:scaleY(1.09);transform-origin:0 15.4px">K</div></div>
<div class="abs" style="left:544.5px;top:365.28px;width:123.5px;height:20.3px;overflow:hidden"><div style="white-space:pre;font-size:13.6px;line-height:21px;color:#000;padding-left:4.5px;transform:scaleY(1.09);transform-origin:0 15.4px">27%</div></div>
<div class="abs" style="left:669.0px;top:365.28px;width:125.0px;height:20.3px;overflow:hidden"><div style="white-space:pre;font-size:13.6px;line-height:21px;color:#000;text-align:right;padding-right:7px;transform:scaleY(1.09);transform-origin:0 15.4px">-250 000,00</div></div>
<div class="abs" style="left:794.0px;top:365.28px;width:125.0px;height:20.3px;overflow:hidden"><div style="white-space:pre;font-size:13.6px;line-height:21px;color:#000;text-align:right;padding-right:7px;transform:scaleY(1.09);transform-origin:0 15.4px">-67 500,00</div></div>
<div class="abs" style="left:919.0px;top:365.28px;width:125.0px;height:20.3px;overflow:hidden"><div style="white-space:pre;font-size:13.6px;line-height:21px;color:#000;text-align:right;padding-right:7px;transform:scaleY(1.09);transform-origin:0 15.4px">-317 500,00</div></div>
<div class="abs" style="left:1044.5px;top:365.28px;width:436.5px;height:20.3px;overflow:hidden"><div style="white-space:pre;font-size:13.6px;line-height:21px;color:#000;padding-left:4.5px;transform:scaleY(1.09);transform-origin:0 15.4px">66 - 27%-os kulcs alá tartozó belföldi termékbeszerzés,  szolgáltatás után</div></div>
<div class="abs" style="left:1482.5px;top:365.28px;width:27.5px;height:20.3px;overflow:hidden"><div style="white-space:pre;font-size:13.6px;line-height:21px;color:#000;padding-left:4.5px;transform:scaleY(1.09);transform-origin:0 15.4px">Átutalás</div></div>
<div class="abs" style="left:51.0px;top:386.55px;width:1460px;height:20.3px;background:#f2f2f2"></div>
<div class="abs" style="left:51.0px;top:406.85px;width:1460px;height:1px;background:#dcdcdc"></div>
<div class="abs" style="left:29.5px;top:386.55px;width:123.5px;height:20.3px;overflow:hidden"><div style="white-space:pre;font-size:13.6px;line-height:21px;color:#000;padding-left:4.5px;transform:scaleY(1.09);transform-origin:0 15.4px">2025.02.10.</div></div>
<div class="abs" style="left:154.5px;top:386.55px;width:123.5px;height:20.3px;overflow:hidden"><div style="white-space:pre;font-size:13.6px;line-height:21px;color:#000;padding-left:4.5px;transform:scaleY(1.09);transform-origin:0 15.4px">2024.07.02.</div></div>
<div class="abs" style="left:279.5px;top:386.55px;width:123.5px;height:20.3px;overflow:hidden"><div style="white-space:pre;font-size:13.6px;line-height:21px;color:#000;padding-left:4.5px;transform:scaleY(1.09);transform-origin:0 15.4px">25-ös áfa</div></div>
<div class="abs" style="left:529.5px;top:386.55px;width:13.5px;height:20.3px;overflow:hidden"><div style="white-space:pre;font-size:13.6px;line-height:21px;color:#000;padding-left:4.5px;transform:scaleY(1.09);transform-origin:0 15.4px">&quot;H</div></div>
<div class="abs" style="left:544.5px;top:386.55px;width:123.5px;height:20.3px;overflow:hidden"><div style="white-space:pre;font-size:13.6px;line-height:21px;color:#000;padding-left:4.5px;transform:scaleY(1.09);transform-origin:0 15.4px">27%</div></div>
<div class="abs" style="left:669.0px;top:386.55px;width:125.0px;height:20.3px;overflow:hidden"><div style="white-space:pre;font-size:13.6px;line-height:21px;color:#000;text-align:right;padding-right:7px;transform:scaleY(1.09);transform-origin:0 15.4px">50 000,00</div></div>
<div class="abs" style="left:794.0px;top:386.55px;width:125.0px;height:20.3px;overflow:hidden"><div style="white-space:pre;font-size:13.6px;line-height:21px;color:#000;text-align:right;padding-right:7px;transform:scaleY(1.09);transform-origin:0 15.4px">13 500,00</div></div>
<div class="abs" style="left:919.0px;top:386.55px;width:125.0px;height:20.3px;overflow:hidden"><div style="white-space:pre;font-size:13.6px;line-height:21px;color:#000;text-align:right;padding-right:7px;transform:scaleY(1.09);transform-origin:0 15.4px">63 500,00</div></div>
<div class="abs" style="left:1044.5px;top:386.55px;width:436.5px;height:20.3px;overflow:hidden"><div style="white-space:pre;font-size:13.6px;line-height:21px;color:#000;padding-left:4.5px;transform:scaleY(1.09);transform-origin:0 15.4px">7 - 27%-os kulcs alá tartozó értékesítés</div></div>
<div class="abs" style="left:1482.5px;top:386.55px;width:27.5px;height:20.3px;overflow:hidden"><div style="white-space:pre;font-size:13.6px;line-height:21px;color:#000;padding-left:4.5px;transform:scaleY(1.09);transform-origin:0 15.4px">bank</div></div>
<div class="abs" style="left:51.0px;top:407.82px;width:1460px;height:20.3px;background:#ffffff"></div>
<div class="abs" style="left:51.0px;top:428.12px;width:1460px;height:1px;background:#dcdcdc"></div>
<div class="abs" style="left:29.5px;top:407.82px;width:123.5px;height:20.3px;overflow:hidden"><div style="white-space:pre;font-size:13.6px;line-height:21px;color:#000;padding-left:4.5px;transform:scaleY(1.09);transform-origin:0 15.4px">2025.02.10.</div></div>
<div class="abs" style="left:154.5px;top:407.82px;width:123.5px;height:20.3px;overflow:hidden"><div style="white-space:pre;font-size:13.6px;line-height:21px;color:#000;padding-left:4.5px;transform:scaleY(1.09);transform-origin:0 15.4px">2024.07.02.</div></div>
<div class="abs" style="left:279.5px;top:407.82px;width:123.5px;height:20.3px;overflow:hidden"><div style="white-space:pre;font-size:13.6px;line-height:21px;color:#000;padding-left:4.5px;transform:scaleY(1.09);transform-origin:0 15.4px">25-ös áfa_Jóv</div></div>
<div class="abs" style="left:404.5px;top:407.82px;width:123.5px;height:20.3px;overflow:hidden"><div style="white-space:pre;font-size:13.6px;line-height:21px;color:#000;padding-left:4.5px;transform:scaleY(1.09);transform-origin:0 15.4px">25-ös áfa</div></div>
<div class="abs" style="left:529.5px;top:407.82px;width:13.5px;height:20.3px;overflow:hidden"><div style="white-space:pre;font-size:13.6px;line-height:21px;color:#000;padding-left:4.5px;transform:scaleY(1.09);transform-origin:0 15.4px">&quot;H</div></div>
<div class="abs" style="left:544.5px;top:407.82px;width:123.5px;height:20.3px;overflow:hidden"><div style="white-space:pre;font-size:13.6px;line-height:21px;color:#000;padding-left:4.5px;transform:scaleY(1.09);transform-origin:0 15.4px">27%</div></div>
<div class="abs" style="left:669.0px;top:407.82px;width:125.0px;height:20.3px;overflow:hidden"><div style="white-space:pre;font-size:13.6px;line-height:21px;color:#000;text-align:right;padding-right:7px;transform:scaleY(1.09);transform-origin:0 15.4px">-50 000,00</div></div>
<div class="abs" style="left:794.0px;top:407.82px;width:125.0px;height:20.3px;overflow:hidden"><div style="white-space:pre;font-size:13.6px;line-height:21px;color:#000;text-align:right;padding-right:7px;transform:scaleY(1.09);transform-origin:0 15.4px">-13 500,00</div></div>
<div class="abs" style="left:919.0px;top:407.82px;width:125.0px;height:20.3px;overflow:hidden"><div style="white-space:pre;font-size:13.6px;line-height:21px;color:#000;text-align:right;padding-right:7px;transform:scaleY(1.09);transform-origin:0 15.4px">-63 500,00</div></div>
<div class="abs" style="left:1044.5px;top:407.82px;width:436.5px;height:20.3px;overflow:hidden"><div style="white-space:pre;font-size:13.6px;line-height:21px;color:#000;padding-left:4.5px;transform:scaleY(1.09);transform-origin:0 15.4px">7 - 27%-os kulcs alá tartozó értékesítés</div></div>
<div class="abs" style="left:1482.5px;top:407.82px;width:27.5px;height:20.3px;overflow:hidden"><div style="white-space:pre;font-size:13.6px;line-height:21px;color:#000;padding-left:4.5px;transform:scaleY(1.09);transform-origin:0 15.4px">bank</div></div>
<div class="abs" style="left:51.0px;top:429.09px;width:1460px;height:20.3px;background:#f2f2f2"></div>
<div class="abs" style="left:51.0px;top:449.39px;width:1460px;height:1px;background:#dcdcdc"></div>
<div class="abs" style="left:29.5px;top:429.09px;width:123.5px;height:20.3px;overflow:hidden"><div style="white-space:pre;font-size:13.6px;line-height:21px;color:#000;padding-left:4.5px;transform:scaleY(1.09);transform-origin:0 15.4px">2025.02.10.</div></div>
<div class="abs" style="left:154.5px;top:429.09px;width:123.5px;height:20.3px;overflow:hidden"><div style="white-space:pre;font-size:13.6px;line-height:21px;color:#000;padding-left:4.5px;transform:scaleY(1.09);transform-origin:0 15.4px">2025.02.10.</div></div>
<div class="abs" style="left:279.5px;top:429.09px;width:123.5px;height:20.3px;overflow:hidden"><div style="white-space:pre;font-size:13.6px;line-height:21px;color:#000;padding-left:4.5px;transform:scaleY(1.09);transform-origin:0 15.4px">250210</div></div>
<div class="abs" style="left:529.5px;top:429.09px;width:13.5px;height:20.3px;overflow:hidden"><div style="white-space:pre;font-size:13.6px;line-height:21px;color:#000;padding-left:4.5px;transform:scaleY(1.09);transform-origin:0 15.4px">A</div></div>
<div class="abs" style="left:544.5px;top:429.09px;width:123.5px;height:20.3px;overflow:hidden"><div style="white-space:pre;font-size:13.6px;line-height:21px;color:#000;padding-left:4.5px;transform:scaleY(1.09);transform-origin:0 15.4px">27%</div></div>
<div class="abs" style="left:669.0px;top:429.09px;width:125.0px;height:20.3px;overflow:hidden"><div style="white-space:pre;font-size:13.6px;line-height:21px;color:#000;text-align:right;padding-right:7px;transform:scaleY(1.09);transform-origin:0 15.4px">500 000,00</div></div>
<div class="abs" style="left:794.0px;top:429.09px;width:125.0px;height:20.3px;overflow:hidden"><div style="white-space:pre;font-size:13.6px;line-height:21px;color:#000;text-align:right;padding-right:7px;transform:scaleY(1.09);transform-origin:0 15.4px">135 000,00</div></div>
<div class="abs" style="left:919.0px;top:429.09px;width:125.0px;height:20.3px;overflow:hidden"><div style="white-space:pre;font-size:13.6px;line-height:21px;color:#000;text-align:right;padding-right:7px;transform:scaleY(1.09);transform-origin:0 15.4px">635 000,00</div></div>
<div class="abs" style="left:1044.5px;top:429.09px;width:436.5px;height:20.3px;overflow:hidden"><div style="white-space:pre;font-size:13.6px;line-height:21px;color:#000;padding-left:4.5px;transform:scaleY(1.09);transform-origin:0 15.4px">7 - 27%-os kulcs alá tartozó értékesítés</div></div>
<div class="abs" style="left:1482.5px;top:429.09px;width:27.5px;height:20.3px;overflow:hidden"><div style="white-space:pre;font-size:13.6px;line-height:21px;color:#000;padding-left:4.5px;transform:scaleY(1.09);transform-origin:0 15.4px">Átutalás</div></div>
<div class="abs" style="left:51.0px;top:450.36px;width:1460px;height:20.3px;background:#ffffff"></div>
<div class="abs" style="left:51.0px;top:470.66px;width:1460px;height:1px;background:#dcdcdc"></div>
<div class="abs" style="left:29.5px;top:450.36px;width:123.5px;height:20.3px;overflow:hidden"><div style="white-space:pre;font-size:13.6px;line-height:21px;color:#000;padding-left:4.5px;transform:scaleY(1.09);transform-origin:0 15.4px">2025.02.10.</div></div>
<div class="abs" style="left:154.5px;top:450.36px;width:123.5px;height:20.3px;overflow:hidden"><div style="white-space:pre;font-size:13.6px;line-height:21px;color:#000;padding-left:4.5px;transform:scaleY(1.09);transform-origin:0 15.4px">2025.02.10.</div></div>
<div class="abs" style="left:279.5px;top:450.36px;width:123.5px;height:20.3px;overflow:hidden"><div style="white-space:pre;font-size:13.6px;line-height:21px;color:#000;padding-left:4.5px;transform:scaleY(1.09);transform-origin:0 15.4px">a11/25</div></div>
<div class="abs" style="left:529.5px;top:450.36px;width:13.5px;height:20.3px;overflow:hidden"><div style="white-space:pre;font-size:13.6px;line-height:21px;color:#000;padding-left:4.5px;transform:scaleY(1.09);transform-origin:0 15.4px">F</div></div>
<div class="abs" style="left:544.5px;top:450.36px;width:123.5px;height:20.3px;overflow:hidden"><div style="white-space:pre;font-size:13.6px;line-height:21px;color:#000;padding-left:4.5px;transform:scaleY(1.09);transform-origin:0 15.4px">27%</div></div>
<div class="abs" style="left:669.0px;top:450.36px;width:125.0px;height:20.3px;overflow:hidden"><div style="white-space:pre;font-size:13.6px;line-height:21px;color:#000;text-align:right;padding-right:7px;transform:scaleY(1.09);transform-origin:0 15.4px">5 000,00</div></div>
<div class="abs" style="left:794.0px;top:450.36px;width:125.0px;height:20.3px;overflow:hidden"><div style="white-space:pre;font-size:13.6px;line-height:21px;color:#000;text-align:right;padding-right:7px;transform:scaleY(1.09);transform-origin:0 15.4px">1 350,00</div></div>
<div class="abs" style="left:919.0px;top:450.36px;width:125.0px;height:20.3px;overflow:hidden"><div style="white-space:pre;font-size:13.6px;line-height:21px;color:#000;text-align:right;padding-right:7px;transform:scaleY(1.09);transform-origin:0 15.4px">6 350,00</div></div>
<div class="abs" style="left:1044.5px;top:450.36px;width:436.5px;height:20.3px;overflow:hidden"><div style="white-space:pre;font-size:13.6px;line-height:21px;color:#000;padding-left:4.5px;transform:scaleY(1.09);transform-origin:0 15.4px">7 - 27%-os kulcs alá tartozó értékesítés</div></div>
<div class="abs" style="left:1482.5px;top:450.36px;width:27.5px;height:20.3px;overflow:hidden"><div style="white-space:pre;font-size:13.6px;line-height:21px;color:#000;padding-left:4.5px;transform:scaleY(1.09);transform-origin:0 15.4px">Átutalás</div></div>
<div class="abs" style="left:51.0px;top:471.63px;width:1460px;height:20.3px;background:#f2f2f2"></div>
<div class="abs" style="left:51.0px;top:491.93px;width:1460px;height:1px;background:#dcdcdc"></div>
<div class="abs" style="left:29.5px;top:471.63px;width:123.5px;height:20.3px;overflow:hidden"><div style="white-space:pre;font-size:13.6px;line-height:21px;color:#000;padding-left:4.5px;transform:scaleY(1.09);transform-origin:0 15.4px">2025.02.10.</div></div>
<div class="abs" style="left:154.5px;top:471.63px;width:123.5px;height:20.3px;overflow:hidden"><div style="white-space:pre;font-size:13.6px;line-height:21px;color:#000;padding-left:4.5px;transform:scaleY(1.09);transform-origin:0 15.4px">2025.02.10.</div></div>
<div class="abs" style="left:279.5px;top:471.63px;width:123.5px;height:20.3px;overflow:hidden"><div style="white-space:pre;font-size:13.6px;line-height:21px;color:#000;padding-left:4.5px;transform:scaleY(1.09);transform-origin:0 15.4px">a12/25</div></div>
<div class="abs" style="left:529.5px;top:471.63px;width:13.5px;height:20.3px;overflow:hidden"><div style="white-space:pre;font-size:13.6px;line-height:21px;color:#000;padding-left:4.5px;transform:scaleY(1.09);transform-origin:0 15.4px">B</div></div>
<div class="abs" style="left:544.5px;top:471.63px;width:123.5px;height:20.3px;overflow:hidden"><div style="white-space:pre;font-size:13.6px;line-height:21px;color:#000;padding-left:4.5px;transform:scaleY(1.09);transform-origin:0 15.4px">ATHKÉRT</div></div>
<div class="abs" style="left:669.0px;top:471.63px;width:125.0px;height:20.3px;overflow:hidden"><div style="white-space:pre;font-size:13.6px;line-height:21px;color:#000;text-align:right;padding-right:7px;transform:scaleY(1.09);transform-origin:0 15.4px">72 500,00</div></div>
<div class="abs" style="left:794.0px;top:471.63px;width:125.0px;height:20.3px;overflow:hidden"><div style="white-space:pre;font-size:13.6px;line-height:21px;color:#000;text-align:right;padding-right:7px;transform:scaleY(1.09);transform-origin:0 15.4px">0,00</div></div>
<div class="abs" style="left:919.0px;top:471.63px;width:125.0px;height:20.3px;overflow:hidden"><div style="white-space:pre;font-size:13.6px;line-height:21px;color:#000;text-align:right;padding-right:7px;transform:scaleY(1.09);transform-origin:0 15.4px">72 500,00</div></div>
<div class="abs" style="left:1044.5px;top:471.63px;width:436.5px;height:20.3px;overflow:hidden"><div style="white-space:pre;font-size:13.6px;line-height:21px;color:#000;padding-left:4.5px;transform:scaleY(1.09);transform-origin:0 15.4px">90 - Az áfa tv. területi hatályán kívül teljesített termékértékesítés adó nélkül</div></div>
<div class="abs" style="left:1482.5px;top:471.63px;width:27.5px;height:20.3px;overflow:hidden"><div style="white-space:pre;font-size:13.6px;line-height:21px;color:#000;padding-left:4.5px;transform:scaleY(1.09);transform-origin:0 15.4px">Átutalás</div></div>
<div class="abs" style="left:51.0px;top:492.90px;width:1460px;height:20.3px;background:#ffffff"></div>
<div class="abs" style="left:51.0px;top:513.20px;width:1460px;height:1px;background:#dcdcdc"></div>
<div class="abs" style="left:29.5px;top:492.90px;width:123.5px;height:20.3px;overflow:hidden"><div style="white-space:pre;font-size:13.6px;line-height:21px;color:#000;padding-left:4.5px;transform:scaleY(1.09);transform-origin:0 15.4px">2025.02.10.</div></div>
<div class="abs" style="left:154.5px;top:492.90px;width:123.5px;height:20.3px;overflow:hidden"><div style="white-space:pre;font-size:13.6px;line-height:21px;color:#000;padding-left:4.5px;transform:scaleY(1.09);transform-origin:0 15.4px">2025.02.10.</div></div>
<div class="abs" style="left:279.5px;top:492.90px;width:123.5px;height:20.3px;overflow:hidden"><div style="white-space:pre;font-size:13.6px;line-height:21px;color:#000;padding-left:4.5px;transform:scaleY(1.09);transform-origin:0 15.4px">új25/007</div></div>
<div class="abs" style="left:529.5px;top:492.90px;width:13.5px;height:20.3px;overflow:hidden"><div style="white-space:pre;font-size:13.6px;line-height:21px;color:#000;padding-left:4.5px;transform:scaleY(1.09);transform-origin:0 15.4px">&quot;H</div></div>
<div class="abs" style="left:544.5px;top:492.90px;width:123.5px;height:20.3px;overflow:hidden"><div style="white-space:pre;font-size:13.6px;line-height:21px;color:#000;padding-left:4.5px;transform:scaleY(1.09);transform-origin:0 15.4px">27%</div></div>
<div class="abs" style="left:669.0px;top:492.90px;width:125.0px;height:20.3px;overflow:hidden"><div style="white-space:pre;font-size:13.6px;line-height:21px;color:#000;text-align:right;padding-right:7px;transform:scaleY(1.09);transform-origin:0 15.4px">500 000,00</div></div>
<div class="abs" style="left:794.0px;top:492.90px;width:125.0px;height:20.3px;overflow:hidden"><div style="white-space:pre;font-size:13.6px;line-height:21px;color:#000;text-align:right;padding-right:7px;transform:scaleY(1.09);transform-origin:0 15.4px">135 000,00</div></div>
<div class="abs" style="left:919.0px;top:492.90px;width:125.0px;height:20.3px;overflow:hidden"><div style="white-space:pre;font-size:13.6px;line-height:21px;color:#000;text-align:right;padding-right:7px;transform:scaleY(1.09);transform-origin:0 15.4px">635 000,00</div></div>
<div class="abs" style="left:1044.5px;top:492.90px;width:436.5px;height:20.3px;overflow:hidden"><div style="white-space:pre;font-size:13.6px;line-height:21px;color:#000;padding-left:4.5px;transform:scaleY(1.09);transform-origin:0 15.4px">7 - 27%-os kulcs alá tartozó értékesítés</div></div>
<div class="abs" style="left:1482.5px;top:492.90px;width:27.5px;height:20.3px;overflow:hidden"><div style="white-space:pre;font-size:13.6px;line-height:21px;color:#000;padding-left:4.5px;transform:scaleY(1.09);transform-origin:0 15.4px">bank</div></div>
<div class="abs" style="left:51.0px;top:514.17px;width:1460px;height:20.3px;background:#f2f2f2"></div>
<div class="abs" style="left:51.0px;top:534.47px;width:1460px;height:1px;background:#dcdcdc"></div>
<div class="abs" style="left:29.5px;top:514.17px;width:123.5px;height:20.3px;overflow:hidden"><div style="white-space:pre;font-size:13.6px;line-height:21px;color:#000;padding-left:4.5px;transform:scaleY(1.09);transform-origin:0 15.4px">2025.02.10.</div></div>
<div class="abs" style="left:154.5px;top:514.17px;width:123.5px;height:20.3px;overflow:hidden"><div style="white-space:pre;font-size:13.6px;line-height:21px;color:#000;padding-left:4.5px;transform:scaleY(1.09);transform-origin:0 15.4px">2025.02.10.</div></div>
<div class="abs" style="left:279.5px;top:514.17px;width:123.5px;height:20.3px;overflow:hidden"><div style="white-space:pre;font-size:13.6px;line-height:21px;color:#000;padding-left:4.5px;transform:scaleY(1.09);transform-origin:0 15.4px">új25/008</div></div>
<div class="abs" style="left:529.5px;top:514.17px;width:13.5px;height:20.3px;overflow:hidden"><div style="white-space:pre;font-size:13.6px;line-height:21px;color:#000;padding-left:4.5px;transform:scaleY(1.09);transform-origin:0 15.4px">A</div></div>
<div class="abs" style="left:544.5px;top:514.17px;width:123.5px;height:20.3px;overflow:hidden"><div style="white-space:pre;font-size:13.6px;line-height:21px;color:#000;padding-left:4.5px;transform:scaleY(1.09);transform-origin:0 15.4px">27%</div></div>
<div class="abs" style="left:669.0px;top:514.17px;width:125.0px;height:20.3px;overflow:hidden"><div style="white-space:pre;font-size:13.6px;line-height:21px;color:#000;text-align:right;padding-right:7px;transform:scaleY(1.09);transform-origin:0 15.4px">500 000,00</div></div>
<div class="abs" style="left:794.0px;top:514.17px;width:125.0px;height:20.3px;overflow:hidden"><div style="white-space:pre;font-size:13.6px;line-height:21px;color:#000;text-align:right;padding-right:7px;transform:scaleY(1.09);transform-origin:0 15.4px">135 000,00</div></div>
<div class="abs" style="left:919.0px;top:514.17px;width:125.0px;height:20.3px;overflow:hidden"><div style="white-space:pre;font-size:13.6px;line-height:21px;color:#000;text-align:right;padding-right:7px;transform:scaleY(1.09);transform-origin:0 15.4px">635 000,00</div></div>
<div class="abs" style="left:1044.5px;top:514.17px;width:436.5px;height:20.3px;overflow:hidden"><div style="white-space:pre;font-size:13.6px;line-height:21px;color:#000;padding-left:4.5px;transform:scaleY(1.09);transform-origin:0 15.4px">7 - 27%-os kulcs alá tartozó értékesítés</div></div>
<div class="abs" style="left:1482.5px;top:514.17px;width:27.5px;height:20.3px;overflow:hidden"><div style="white-space:pre;font-size:13.6px;line-height:21px;color:#000;padding-left:4.5px;transform:scaleY(1.09);transform-origin:0 15.4px">Átutalás</div></div>
<div class="abs" style="left:51.0px;top:535.44px;width:1460px;height:20.3px;background:#ffffff"></div>
<div class="abs" style="left:51.0px;top:555.74px;width:1460px;height:1px;background:#dcdcdc"></div>
<div class="abs" style="left:29.5px;top:535.44px;width:123.5px;height:20.3px;overflow:hidden"><div style="white-space:pre;font-size:13.6px;line-height:21px;color:#000;padding-left:4.5px;transform:scaleY(1.09);transform-origin:0 15.4px">2025.02.10.</div></div>
<div class="abs" style="left:154.5px;top:535.44px;width:123.5px;height:20.3px;overflow:hidden"><div style="white-space:pre;font-size:13.6px;line-height:21px;color:#000;padding-left:4.5px;transform:scaleY(1.09);transform-origin:0 15.4px">2025.02.10.</div></div>
<div class="abs" style="left:279.5px;top:535.44px;width:123.5px;height:20.3px;overflow:hidden"><div style="white-space:pre;font-size:13.6px;line-height:21px;color:#000;padding-left:4.5px;transform:scaleY(1.09);transform-origin:0 15.4px">új25/009</div></div>
<div class="abs" style="left:529.5px;top:535.44px;width:13.5px;height:20.3px;overflow:hidden"><div style="white-space:pre;font-size:13.6px;line-height:21px;color:#000;padding-left:4.5px;transform:scaleY(1.09);transform-origin:0 15.4px">K</div></div>
<div class="abs" style="left:544.5px;top:535.44px;width:123.5px;height:20.3px;overflow:hidden"><div style="white-space:pre;font-size:13.6px;line-height:21px;color:#000;padding-left:4.5px;transform:scaleY(1.09);transform-origin:0 15.4px">27%</div></div>
<div class="abs" style="left:669.0px;top:535.44px;width:125.0px;height:20.3px;overflow:hidden"><div style="white-space:pre;font-size:13.6px;line-height:21px;color:#000;text-align:right;padding-right:7px;transform:scaleY(1.09);transform-origin:0 15.4px">50 000,00</div></div>
<div class="abs" style="left:794.0px;top:535.44px;width:125.0px;height:20.3px;overflow:hidden"><div style="white-space:pre;font-size:13.6px;line-height:21px;color:#000;text-align:right;padding-right:7px;transform:scaleY(1.09);transform-origin:0 15.4px">13 500,00</div></div>
<div class="abs" style="left:919.0px;top:535.44px;width:125.0px;height:20.3px;overflow:hidden"><div style="white-space:pre;font-size:13.6px;line-height:21px;color:#000;text-align:right;padding-right:7px;transform:scaleY(1.09);transform-origin:0 15.4px">63 500,00</div></div>
<div class="abs" style="left:1044.5px;top:535.44px;width:436.5px;height:20.3px;overflow:hidden"><div style="white-space:pre;font-size:13.6px;line-height:21px;color:#000;padding-left:4.5px;transform:scaleY(1.09);transform-origin:0 15.4px">7 - 27%-os kulcs alá tartozó értékesítés</div></div>
<div class="abs" style="left:1482.5px;top:535.44px;width:27.5px;height:20.3px;overflow:hidden"><div style="white-space:pre;font-size:13.6px;line-height:21px;color:#000;padding-left:4.5px;transform:scaleY(1.09);transform-origin:0 15.4px">Átutalás</div></div>
<div class="abs" style="left:51.0px;top:556.71px;width:1460px;height:20.3px;background:#f2f2f2"></div>
<div class="abs" style="left:51.0px;top:577.01px;width:1460px;height:1px;background:#dcdcdc"></div>
<div class="abs" style="left:29.5px;top:556.71px;width:123.5px;height:20.3px;overflow:hidden"><div style="white-space:pre;font-size:13.6px;line-height:21px;color:#000;padding-left:4.5px;transform:scaleY(1.09);transform-origin:0 15.4px">2025.02.10.</div></div>
<div class="abs" style="left:154.5px;top:556.71px;width:123.5px;height:20.3px;overflow:hidden"><div style="white-space:pre;font-size:13.6px;line-height:21px;color:#000;padding-left:4.5px;transform:scaleY(1.09);transform-origin:0 15.4px">2025.02.10.</div></div>
<div class="abs" style="left:279.5px;top:556.71px;width:123.5px;height:20.3px;overflow:hidden"><div style="white-space:pre;font-size:13.6px;line-height:21px;color:#000;padding-left:4.5px;transform:scaleY(1.09);transform-origin:0 15.4px">új25/010</div></div>
<div class="abs" style="left:529.5px;top:556.71px;width:13.5px;height:20.3px;overflow:hidden"><div style="white-space:pre;font-size:13.6px;line-height:21px;color:#000;padding-left:4.5px;transform:scaleY(1.09);transform-origin:0 15.4px">K</div></div>
<div class="abs" style="left:544.5px;top:556.71px;width:123.5px;height:20.3px;overflow:hidden"><div style="white-space:pre;font-size:13.6px;line-height:21px;color:#000;padding-left:4.5px;transform:scaleY(1.09);transform-origin:0 15.4px">27%</div></div>
<div class="abs" style="left:669.0px;top:556.71px;width:125.0px;height:20.3px;overflow:hidden"><div style="white-space:pre;font-size:13.6px;line-height:21px;color:#000;text-align:right;padding-right:7px;transform:scaleY(1.09);transform-origin:0 15.4px">50 000,00</div></div>
<div class="abs" style="left:794.0px;top:556.71px;width:125.0px;height:20.3px;overflow:hidden"><div style="white-space:pre;font-size:13.6px;line-height:21px;color:#000;text-align:right;padding-right:7px;transform:scaleY(1.09);transform-origin:0 15.4px">13 500,00</div></div>
<div class="abs" style="left:919.0px;top:556.71px;width:125.0px;height:20.3px;overflow:hidden"><div style="white-space:pre;font-size:13.6px;line-height:21px;color:#000;text-align:right;padding-right:7px;transform:scaleY(1.09);transform-origin:0 15.4px">63 500,00</div></div>
<div class="abs" style="left:1044.5px;top:556.71px;width:436.5px;height:20.3px;overflow:hidden"><div style="white-space:pre;font-size:13.6px;line-height:21px;color:#000;padding-left:4.5px;transform:scaleY(1.09);transform-origin:0 15.4px">7 - 27%-os kulcs alá tartozó értékesítés</div></div>
<div class="abs" style="left:1482.5px;top:556.71px;width:27.5px;height:20.3px;overflow:hidden"><div style="white-space:pre;font-size:13.6px;line-height:21px;color:#000;padding-left:4.5px;transform:scaleY(1.09);transform-origin:0 15.4px">Átutalás</div></div>
<div class="abs" style="left:51.0px;top:577.98px;width:1460px;height:20.3px;background:#ffffff"></div>
<div class="abs" style="left:51.0px;top:598.28px;width:1460px;height:1px;background:#dcdcdc"></div>
<div class="abs" style="left:29.5px;top:577.98px;width:123.5px;height:20.3px;overflow:hidden"><div style="white-space:pre;font-size:13.6px;line-height:21px;color:#000;padding-left:4.5px;transform:scaleY(1.09);transform-origin:0 15.4px">2025.02.10.</div></div>
<div class="abs" style="left:154.5px;top:577.98px;width:123.5px;height:20.3px;overflow:hidden"><div style="white-space:pre;font-size:13.6px;line-height:21px;color:#000;padding-left:4.5px;transform:scaleY(1.09);transform-origin:0 15.4px">2025.02.10.</div></div>
<div class="abs" style="left:279.5px;top:577.98px;width:123.5px;height:20.3px;overflow:hidden"><div style="white-space:pre;font-size:13.6px;line-height:21px;color:#000;padding-left:4.5px;transform:scaleY(1.09);transform-origin:0 15.4px">új25/013</div></div>
<div class="abs" style="left:529.5px;top:577.98px;width:13.5px;height:20.3px;overflow:hidden"><div style="white-space:pre;font-size:13.6px;line-height:21px;color:#000;padding-left:4.5px;transform:scaleY(1.09);transform-origin:0 15.4px">S</div></div>
<div class="abs" style="left:544.5px;top:577.98px;width:123.5px;height:20.3px;overflow:hidden"><div style="white-space:pre;font-size:13.6px;line-height:21px;color:#000;padding-left:4.5px;transform:scaleY(1.09);transform-origin:0 15.4px">MAA</div></div>
<div class="abs" style="left:669.0px;top:577.98px;width:125.0px;height:20.3px;overflow:hidden"><div style="white-space:pre;font-size:13.6px;line-height:21px;color:#000;text-align:right;padding-right:7px;transform:scaleY(1.09);transform-origin:0 15.4px">40 516,00</div></div>
<div class="abs" style="left:794.0px;top:577.98px;width:125.0px;height:20.3px;overflow:hidden"><div style="white-space:pre;font-size:13.6px;line-height:21px;color:#000;text-align:right;padding-right:7px;transform:scaleY(1.09);transform-origin:0 15.4px">0,00</div></div>
<div class="abs" style="left:919.0px;top:577.98px;width:125.0px;height:20.3px;overflow:hidden"><div style="white-space:pre;font-size:13.6px;line-height:21px;color:#000;text-align:right;padding-right:7px;transform:scaleY(1.09);transform-origin:0 15.4px">40 516,00</div></div>
<div class="abs" style="left:1044.5px;top:577.98px;width:436.5px;height:20.3px;overflow:hidden"><div style="white-space:pre;font-size:13.6px;line-height:21px;color:#000;padding-left:4.5px;transform:scaleY(1.09);transform-origin:0 15.4px">-2 - ÁFA mentes</div></div>
<div class="abs" style="left:1482.5px;top:577.98px;width:27.5px;height:20.3px;overflow:hidden"><div style="white-space:pre;font-size:13.6px;line-height:21px;color:#000;padding-left:4.5px;transform:scaleY(1.09);transform-origin:0 15.4px">Átutalás</div></div>
<div class="abs" style="left:51.0px;top:599.25px;width:1460px;height:20.3px;background:#f2f2f2"></div>
<div class="abs" style="left:51.0px;top:619.55px;width:1460px;height:1px;background:#dcdcdc"></div>
<div class="abs" style="left:29.5px;top:599.25px;width:123.5px;height:20.3px;overflow:hidden"><div style="white-space:pre;font-size:13.6px;line-height:21px;color:#000;padding-left:4.5px;transform:scaleY(1.09);transform-origin:0 15.4px">2025.02.10.</div></div>
<div class="abs" style="left:154.5px;top:599.25px;width:123.5px;height:20.3px;overflow:hidden"><div style="white-space:pre;font-size:13.6px;line-height:21px;color:#000;padding-left:4.5px;transform:scaleY(1.09);transform-origin:0 15.4px">2025.02.10.</div></div>
<div class="abs" style="left:279.5px;top:599.25px;width:123.5px;height:20.3px;overflow:hidden"><div style="white-space:pre;font-size:13.6px;line-height:21px;color:#000;padding-left:4.5px;transform:scaleY(1.09);transform-origin:0 15.4px">új25/014</div></div>
<div class="abs" style="left:529.5px;top:599.25px;width:13.5px;height:20.3px;overflow:hidden"><div style="white-space:pre;font-size:13.6px;line-height:21px;color:#000;padding-left:4.5px;transform:scaleY(1.09);transform-origin:0 15.4px">A</div></div>
<div class="abs" style="left:544.5px;top:599.25px;width:123.5px;height:20.3px;overflow:hidden"><div style="white-space:pre;font-size:13.6px;line-height:21px;color:#000;padding-left:4.5px;transform:scaleY(1.09);transform-origin:0 15.4px">27%</div></div>
<div class="abs" style="left:669.0px;top:599.25px;width:125.0px;height:20.3px;overflow:hidden"><div style="white-space:pre;font-size:13.6px;line-height:21px;color:#000;text-align:right;padding-right:7px;transform:scaleY(1.09);transform-origin:0 15.4px">50 000,00</div></div>
<div class="abs" style="left:794.0px;top:599.25px;width:125.0px;height:20.3px;overflow:hidden"><div style="white-space:pre;font-size:13.6px;line-height:21px;color:#000;text-align:right;padding-right:7px;transform:scaleY(1.09);transform-origin:0 15.4px">13 500,00</div></div>
<div class="abs" style="left:919.0px;top:599.25px;width:125.0px;height:20.3px;overflow:hidden"><div style="white-space:pre;font-size:13.6px;line-height:21px;color:#000;text-align:right;padding-right:7px;transform:scaleY(1.09);transform-origin:0 15.4px">63 500,00</div></div>
<div class="abs" style="left:1044.5px;top:599.25px;width:436.5px;height:20.3px;overflow:hidden"><div style="white-space:pre;font-size:13.6px;line-height:21px;color:#000;padding-left:4.5px;transform:scaleY(1.09);transform-origin:0 15.4px">7 - 27%-os kulcs alá tartozó értékesítés</div></div>
<div class="abs" style="left:1482.5px;top:599.25px;width:27.5px;height:20.3px;overflow:hidden"><div style="white-space:pre;font-size:13.6px;line-height:21px;color:#000;padding-left:4.5px;transform:scaleY(1.09);transform-origin:0 15.4px">Átutalás</div></div>
<div class="abs" style="left:154.0px;top:67.5px;width:1px;height:540px;background:#d6d6d6"></div>
<div class="abs" style="left:279.0px;top:67.5px;width:1px;height:540px;background:#d6d6d6"></div>
<div class="abs" style="left:404.0px;top:67.5px;width:1px;height:540px;background:#d6d6d6"></div>
<div class="abs" style="left:529.0px;top:67.5px;width:1px;height:540px;background:#d6d6d6"></div>
<div class="abs" style="left:544.0px;top:67.5px;width:1px;height:540px;background:#d6d6d6"></div>
<div class="abs" style="left:669.0px;top:67.5px;width:1px;height:540px;background:#d6d6d6"></div>
<div class="abs" style="left:794.0px;top:67.5px;width:1px;height:540px;background:#d6d6d6"></div>
<div class="abs" style="left:919.0px;top:67.5px;width:1px;height:540px;background:#d6d6d6"></div>
<div class="abs" style="left:1044.0px;top:67.5px;width:1px;height:540px;background:#d6d6d6"></div>
<div class="abs" style="left:1482.0px;top:67.5px;width:1px;height:540px;background:#d6d6d6"></div>
<div class="abs" style="left:0;top:0;width:51px;height:605px;background:transparent"></div>
<div class="abs" style="left:0;top:0;width:51px;height:67.5px;background:linear-gradient(#f5f5f5,#efefef 40%,#e6e6e6 75%,#dcdcdc)"></div>
<div class="abs" style="left:0;top:67.50px;width:51px;height:20.3px;background:linear-gradient(#f4f4f4,#e6e6e6 70%,#dadada)"></div>
<div class="abs" style="left:0;top:88.77px;width:51px;height:20.3px;background:linear-gradient(#f4f4f4,#e6e6e6 70%,#dadada)"></div>
<div class="abs" style="left:0;top:110.04px;width:51px;height:20.3px;background:linear-gradient(#f4f4f4,#e6e6e6 70%,#dadada)"></div>
<div class="abs" style="left:0;top:131.31px;width:51px;height:20.3px;background:linear-gradient(#f4f4f4,#e6e6e6 70%,#dadada)"></div>
<div class="abs" style="left:0;top:152.58px;width:51px;height:20.3px;background:linear-gradient(#f4f4f4,#e6e6e6 70%,#dadada)"></div>
<div class="abs" style="left:0;top:173.85px;width:51px;height:20.3px;background:linear-gradient(#f4f4f4,#e6e6e6 70%,#dadada)"></div>
<div class="abs" style="left:0;top:195.12px;width:51px;height:20.3px;background:linear-gradient(#f4f4f4,#e6e6e6 70%,#dadada)"></div>
<div class="abs" style="left:0;top:216.39px;width:51px;height:20.3px;background:linear-gradient(#f4f4f4,#e6e6e6 70%,#dadada)"></div>
<div class="abs" style="left:0;top:237.66px;width:51px;height:20.3px;background:linear-gradient(#f4f4f4,#e6e6e6 70%,#dadada)"></div>
<div class="abs" style="left:0;top:258.93px;width:51px;height:20.3px;background:linear-gradient(#f4f4f4,#e6e6e6 70%,#dadada)"></div>
<div class="abs" style="left:0;top:280.20px;width:51px;height:20.3px;background:linear-gradient(#f4f4f4,#e6e6e6 70%,#dadada)"></div>
<div class="abs" style="left:0;top:301.47px;width:51px;height:20.3px;background:linear-gradient(#f4f4f4,#e6e6e6 70%,#dadada)"></div>
<div class="abs" style="left:0;top:322.74px;width:51px;height:20.3px;background:linear-gradient(#f4f4f4,#e6e6e6 70%,#dadada)"></div>
<div class="abs" style="left:0;top:344.01px;width:51px;height:20.3px;background:linear-gradient(#f4f4f4,#e6e6e6 70%,#dadada)"></div>
<div class="abs" style="left:0;top:365.28px;width:51px;height:20.3px;background:linear-gradient(#f4f4f4,#e6e6e6 70%,#dadada)"></div>
<div class="abs" style="left:0;top:386.55px;width:51px;height:20.3px;background:linear-gradient(#f4f4f4,#e6e6e6 70%,#dadada)"></div>
<div class="abs" style="left:0;top:407.82px;width:51px;height:20.3px;background:linear-gradient(#f4f4f4,#e6e6e6 70%,#dadada)"></div>
<div class="abs" style="left:0;top:429.09px;width:51px;height:20.3px;background:linear-gradient(#f4f4f4,#e6e6e6 70%,#dadada)"></div>
<div class="abs" style="left:0;top:450.36px;width:51px;height:20.3px;background:linear-gradient(#f4f4f4,#e6e6e6 70%,#dadada)"></div>
<div class="abs" style="left:0;top:471.63px;width:51px;height:20.3px;background:linear-gradient(#f4f4f4,#e6e6e6 70%,#dadada)"></div>
<div class="abs" style="left:0;top:492.90px;width:51px;height:20.3px;background:linear-gradient(#f4f4f4,#e6e6e6 70%,#dadada)"></div>
<div class="abs" style="left:0;top:514.17px;width:51px;height:20.3px;background:linear-gradient(#f4f4f4,#e6e6e6 70%,#dadada)"></div>
<div class="abs" style="left:0;top:535.44px;width:51px;height:20.3px;background:linear-gradient(#f4f4f4,#e6e6e6 70%,#dadada)"></div>
<div class="abs" style="left:0;top:556.71px;width:51px;height:20.3px;background:linear-gradient(#f4f4f4,#e6e6e6 70%,#dadada)"></div>
<div class="abs" style="left:0;top:577.98px;width:51px;height:20.3px;background:linear-gradient(#f4f4f4,#e6e6e6 70%,#dadada)"></div>
<div class="abs" style="left:0;top:599.25px;width:51px;height:20.3px;background:linear-gradient(#f4f4f4,#e6e6e6 70%,#dadada)"></div>
<svg class="abs" style="left:3.0px;top:73.0px" width="6" height="9"><path d="M0.5 0.5V8.5L5.5 4.5Z" fill="#5b8ef5"/></svg>
<svg class="abs" style="left:6.5px;top:27.5px" width="15" height="14"><rect x="0.5" y="0.5" width="14" height="13" fill="#f8f39a" stroke="#b8b070"/><rect x="3" y="2.5" width="9" height="1.6" fill="#222"/><rect x="1.5" y="5.5" width="12" height="3" fill="#5a8ff0"/><rect x="3" y="10" width="9" height="1.6" fill="#222"/></svg>
</div>
<div class="abs" style="left:1892px;top:365px;width:20px;height:605px;background:#f0f0f0"></div>
<div class="abs" style="left:1893px;top:386px;width:18px;height:82px;background:#cdcdcd"></div>
<svg class="abs" style="left:1896px;top:372px" width="11" height="8"><path d="M1 6.5L5.5 2L10 6.5" fill="none" stroke="#606060" stroke-width="1.8"/></svg>
<svg class="abs" style="left:1896px;top:954px" width="11" height="8"><path d="M1 1.5L5.5 6L10 1.5" fill="none" stroke="#606060" stroke-width="1.8"/></svg>
<div class="abs" style="left:381px;top:970px;width:1531px;height:21px;background:#f0f0f0"></div>
<div class="abs" style="left:690px;top:971px;width:1095px;height:19px;background:#cdcdcd"></div>
<svg class="abs" style="left:387px;top:975px" width="9" height="12"><path d="M7 1.5L2.5 6L7 10.5" fill="none" stroke="#606060" stroke-width="1.8"/></svg>
<svg class="abs" style="left:1876px;top:975px" width="9" height="12"><path d="M2 1.5L6.5 6L2 10.5" fill="none" stroke="#606060" stroke-width="1.8"/></svg>
<div class="abs" style="left:1411px;top:420px;width:71px;height:229px;border:5px solid #22b14c"></div>
</body></html>
